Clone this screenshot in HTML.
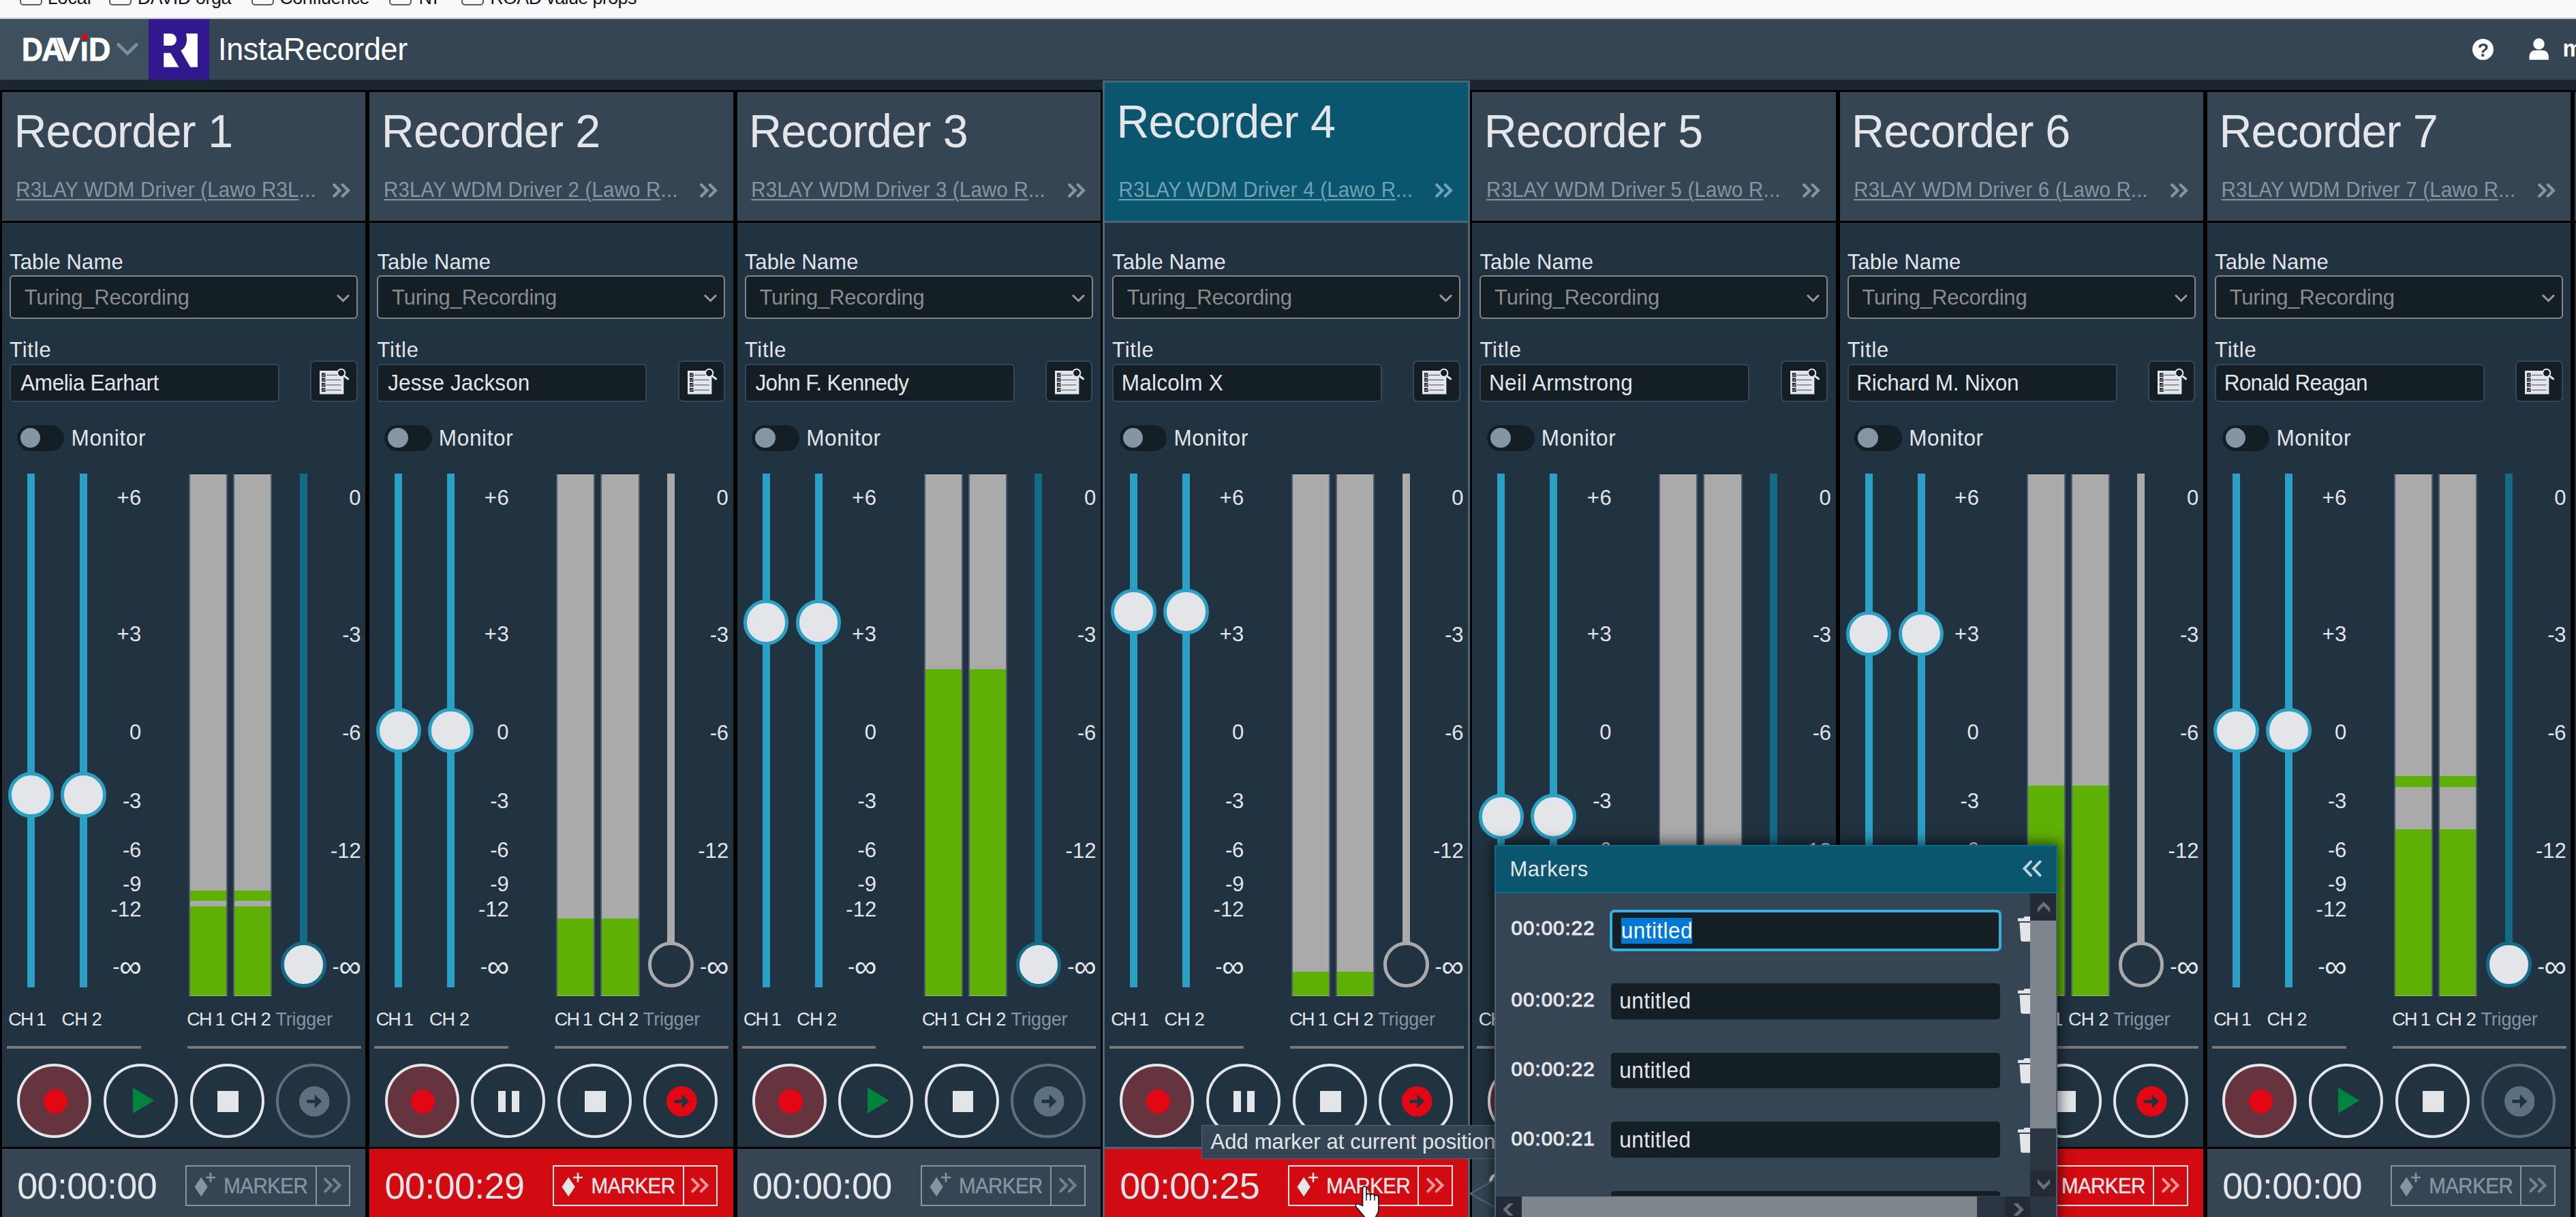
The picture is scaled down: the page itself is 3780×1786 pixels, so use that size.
<!DOCTYPE html>
<html><head><meta charset="utf-8"><title>InstaRecorder</title><style>
html,body{margin:0;padding:0;}
body{width:3780px;height:1786px;overflow:hidden;background:#1b2630;position:relative;font-family:"Liberation Sans",sans-serif;}
.b{position:absolute;display:block;}
.t{position:absolute;white-space:nowrap;line-height:1;display:block;}
</style></head><body>
<div class="b" style="left:0.00px;top:0.00px;width:3780.00px;height:26.20px;background:#f9f9fb;"></div>
<div class="b" style="left:0.00px;top:26.20px;width:3780.00px;height:1.80px;background:#c4c4c8;"></div>
<div class="b" style="left:29.00px;top:-20.00px;width:33.00px;height:28.00px;border:2.8px solid #5b5b66;border-radius:5.5px;box-sizing:border-box;"></div>
<span class="t" style="left:69.67px;top:-16.00px;font-size:27px;color:#15141a;letter-spacing:-0.106px;">Local</span>
<div class="b" style="left:160.00px;top:-20.00px;width:33.00px;height:28.00px;border:2.8px solid #5b5b66;border-radius:5.5px;box-sizing:border-box;"></div>
<span class="t" style="left:201.68px;top:-16.00px;font-size:27px;color:#15141a;letter-spacing:-0.456px;">DAVID orga</span>
<div class="b" style="left:368.80px;top:-20.00px;width:33.00px;height:28.00px;border:2.8px solid #5b5b66;border-radius:5.5px;box-sizing:border-box;"></div>
<span class="t" style="left:410.25px;top:-16.00px;font-size:27px;color:#15141a;letter-spacing:-0.472px;">Confluence</span>
<div class="b" style="left:571.40px;top:-20.00px;width:33.00px;height:28.00px;border:2.8px solid #5b5b66;border-radius:5.5px;box-sizing:border-box;"></div>
<span class="t" style="left:614.38px;top:-16.00px;font-size:27px;color:#15141a;letter-spacing:-3.450px;">NT</span>
<div class="b" style="left:677.40px;top:-20.00px;width:33.00px;height:28.00px;border:2.8px solid #5b5b66;border-radius:5.5px;box-sizing:border-box;"></div>
<span class="t" style="left:719.17px;top:-16.00px;font-size:27px;color:#15141a;letter-spacing:-0.655px;">ROAD value props</span>
<div class="b" style="left:0.00px;top:28.00px;width:3780.00px;height:88.80px;background:#364554;"></div>
<div class="b" style="left:0.00px;top:28.00px;width:218.00px;height:88.80px;background:#3e505e;"></div>
<div class="b" style="left:218.00px;top:28.00px;width:89.00px;height:88.80px;background:#31188f;"></div>
<span class="t" style="left:31.62px;top:48.57px;font-size:48px;color:#fff;font-weight:bold;transform-origin:0 0;transform:scaleX(0.8911);-webkit-text-stroke:0.9px #fff;">D</span>
<span class="t" style="left:61.22px;top:48.57px;font-size:48px;color:#fff;font-weight:bold;transform-origin:0 0;transform:scaleX(0.9575);-webkit-text-stroke:0.9px #fff;">A</span>
<span class="t" style="left:82.93px;top:48.57px;font-size:48px;color:#fff;font-weight:bold;transform-origin:0 0;transform:scaleX(1.0794);-webkit-text-stroke:0.9px #fff;">V</span>
<span class="t" style="left:118.05px;top:56.19px;font-size:39px;color:#fff;font-weight:bold;transform-origin:0 0;transform:scaleX(1.0609);-webkit-text-stroke:0.9px #fff;">I</span>
<span class="t" style="left:129.89px;top:48.57px;font-size:48px;color:#fff;font-weight:bold;transform-origin:0 0;transform:scaleX(0.9316);-webkit-text-stroke:0.9px #fff;">D</span>
<div class="b" style="left:120.20px;top:51.30px;width:7.50px;height:7.20px;background:#e30613;"></div>
<svg class="b" style="left:167.6px;top:59px" width="38" height="26" viewBox="0 0 38 26"><path d="M5.8 6.5 L19 19.5 L32.2 6.5" fill="none" stroke="#7d8d9b" stroke-width="4.8" stroke-linecap="round"/></svg>
<svg class="b" style="left:239.8px;top:49px" width="50.2" height="49.9" viewBox="0 0 50 50"><path d="M0.1 0.2 H10.8 A9 9 0 0 1 10.8 18.1 H0.1 Z M0.1 28.7 H10.2 L22.4 49.7 H0.1 Z M32.9 0.2 H50.2 V49.7 H39.2 L25.2 25.3 Q32.6 21 33.9 11.5 Q34.4 5.5 32.9 0.2 Z" fill="#fff"/></svg>
<span class="t" style="left:320.07px;top:50.00px;font-size:45px;color:#ffffff;letter-spacing:-0.371px;transform-origin:0 38px;transform:scaleY(1.04);">InstaRecorder</span>
<svg class="b" style="left:3628px;top:56.7px" width="31" height="31" viewBox="0 0 31 31"><circle cx="15.5" cy="15.5" r="15.5" fill="#fff"/></svg>
<span class="t" style="left:3635.38px;top:61.00px;font-size:27px;color:#364554;font-weight:bold;">?</span>
<svg class="b" style="left:3709px;top:54px" width="34" height="36" viewBox="0 0 34 36"><circle cx="16.5" cy="10.5" r="8.3" fill="#fff"/><path d="M2.5 33.8 V29 C2.5 23 7 19.8 12 19.8 H21.5 C26.5 19.8 30.8 23 30.8 29 V33.8 Z" fill="#fff"/></svg>
<span class="t" style="left:3760.47px;top:55.00px;font-size:33px;color:#ffffff;font-weight:bold;transform-origin:0 28px;transform:scaleY(1.04);">m</span>
<div class="b" style="left:0.00px;top:132.00px;width:539.33px;height:1664.00px;background:#000;"></div>
<div class="b" style="left:3.00px;top:135.00px;width:533.33px;height:189.30px;background:#364554;"></div>
<div class="b" style="left:3.00px;top:327.00px;width:533.33px;height:1355.80px;background:#213240;"></div>
<div class="b" style="left:3.00px;top:1686.00px;width:533.33px;height:110.00px;background:#364554;"></div>
<span class="t" style="left:20.43px;top:160.00px;font-size:66.5px;color:#e4e5e9;letter-spacing:-0.889px;transform-origin:0 56px;transform:scaleY(1.04);">Recorder</span>
<span class="t" style="left:305.30px;top:160.00px;font-size:66.5px;color:#e4e5e9;transform-origin:0 56px;transform:scaleY(1.04);">1</span>
<span class="t" style="left:23.23px;top:264.00px;font-size:29.5px;color:#8595a3;letter-spacing:0.193px;transform-origin:0 25px;transform:scaleY(1.04);"><span style="text-decoration:underline;text-decoration-thickness:2px;text-underline-offset:3px">R3LAY WDM Driver (Lawo R3L</span>...</span>
<svg class="b" style="left:486.00px;top:266px" width="30" height="27" viewBox="0 0 30 27"><path d="M4.2 5.2 L12.5 13.5 L4.2 21.8 M16.7 5.2 L25 13.5 L16.7 21.8" fill="none" stroke="#8595a3" stroke-width="4.2" stroke-linecap="round"/></svg>
<span class="t" style="left:14.07px;top:369.00px;font-size:31px;color:#e4e5e9;letter-spacing:0.136px;transform-origin:0 26px;transform:scaleY(1.04);">Table Name</span>
<div class="b" style="left:14.00px;top:404.30px;width:511.00px;height:63.70px;background:#131e25;border:2px solid #858585;border-radius:6px;box-sizing:border-box;"></div>
<span class="t" style="left:35.77px;top:421.00px;font-size:31px;color:#8c8c8c;letter-spacing:-0.202px;transform-origin:0 26px;transform:scaleY(1.04);">Turing_Recording</span>
<svg class="b" style="left:492.00px;top:428.5px" width="24" height="18" viewBox="0 0 24 18"><path d="M3 4 L11.5 12.5 L20 4" fill="none" stroke="#9a9a9a" stroke-width="3"/></svg>
<span class="t" style="left:14.07px;top:498.00px;font-size:31px;color:#e4e5e9;letter-spacing:0.806px;transform-origin:0 26px;transform:scaleY(1.04);">Title</span>
<div class="b" style="left:14.00px;top:533.50px;width:396.00px;height:56.20px;background:#131e25;border:2px solid #34485a;border-radius:6px;box-sizing:border-box;"></div>
<span class="t" style="left:30.20px;top:547.00px;font-size:31.5px;color:#e4e5e9;letter-spacing:-0.396px;transform-origin:0 26px;transform:scaleY(1.04);">Amelia Earhart</span>
<div class="b" style="left:455.40px;top:529.30px;width:69.40px;height:60.40px;background:#131e25;border:2px solid #34485a;border-radius:7px;box-sizing:border-box;"></div>
<svg class="b" style="left:468.30px;top:537.90px" width="46" height="42" viewBox="-1 -6 46 42"><rect x="0" y="0" width="35.4" height="34.5" fill="#e4e5e9"/><rect x="3" y="3.4000000000000004" width="5.6" height="5.6" fill="#1a2230"/><path d="M4 6.1000000000000005 l1.4 1.6 l2.4 -3.2" stroke="#e4e5e9" stroke-width="1" fill="none"/><rect x="10" y="5.9" width="21.5" height="1.1" fill="#50586a"/><rect x="3" y="10.5" width="5.6" height="5.6" fill="#1a2230"/><path d="M4 13.2 l1.4 1.6 l2.4 -3.2" stroke="#e4e5e9" stroke-width="1" fill="none"/><rect x="10" y="13.0" width="21.5" height="1.1" fill="#50586a"/><rect x="3" y="17.9" width="5.6" height="5.6" fill="#1a2230"/><path d="M4 20.599999999999998 l1.4 1.6 l2.4 -3.2" stroke="#e4e5e9" stroke-width="1" fill="none"/><rect x="10" y="20.4" width="21.5" height="1.1" fill="#50586a"/><rect x="3" y="25.4" width="5.6" height="5.6" fill="#1a2230"/><path d="M4 28.099999999999998 l1.4 1.6 l2.4 -3.2" stroke="#e4e5e9" stroke-width="1" fill="none"/><rect x="10" y="27.9" width="21.5" height="1.1" fill="#50586a"/><circle cx="31.7" cy="3.4" r="5.6" fill="#131e25" stroke="#e4e5e9" stroke-width="2"/><path d="M35.8 7.6 L41.6 12" stroke="#e4e5e9" stroke-width="3" stroke-linecap="round"/></svg>
<div class="b" style="left:24.60px;top:624.00px;width:69.70px;height:37.80px;background:#131e25;border-radius:19px;"></div>
<div class="b" style="left:29.60px;top:627.90px;width:29.60px;height:29.60px;background:#8595a3;border-radius:50%;"></div>
<span class="t" style="left:104.50px;top:628.00px;font-size:31.5px;color:#e4e5e9;letter-spacing:0.650px;transform-origin:0 26px;transform:scaleY(1.04);">Monitor</span>
<div class="b" style="left:40.00px;top:694.80px;width:11.00px;height:754.00px;background:#2aa0c4;"></div>
<div class="b" style="left:12.20px;top:1133.30px;width:66.60px;height:66.60px;background:#e4e5e9;border:5.6px solid #2aa0c4;border-radius:50%;box-sizing:border-box;"></div>
<div class="b" style="left:116.90px;top:694.80px;width:11.00px;height:754.00px;background:#2aa0c4;"></div>
<div class="b" style="left:89.10px;top:1133.30px;width:66.60px;height:66.60px;background:#e4e5e9;border:5.6px solid #2aa0c4;border-radius:50%;box-sizing:border-box;"></div>
<span class="t" style="left:171.40px;top:715.00px;font-size:31px;color:#e4e5e9;letter-spacing:0.575px;">+6</span>
<span class="t" style="left:171.40px;top:915.00px;font-size:31px;color:#e4e5e9;letter-spacing:0.575px;">+3</span>
<span class="t" style="left:189.97px;top:1059.00px;font-size:31px;color:#e4e5e9;">0</span>
<span class="t" style="left:179.92px;top:1160.00px;font-size:31px;color:#e4e5e9;letter-spacing:-0.200px;">-3</span>
<span class="t" style="left:179.92px;top:1232.00px;font-size:31px;color:#e4e5e9;letter-spacing:-0.200px;">-6</span>
<span class="t" style="left:179.92px;top:1282.00px;font-size:31px;color:#e4e5e9;letter-spacing:-0.075px;">-9</span>
<span class="t" style="left:162.62px;top:1319.00px;font-size:31px;color:#e4e5e9;letter-spacing:0.050px;">-12</span>
<span class="t" style="left:175.07px;top:1394.97px;font-size:46px;color:#e4e5e9;">∞</span>
<span class="t" style="left:165.32px;top:1403.00px;font-size:31px;color:#e4e5e9;">-</span>
<div class="b" style="left:276.90px;top:694.60px;width:57.20px;height:768.50px;background:#aaaaaa;border-left:2px solid #4a5c6e;border-right:2px solid #4a5c6e;border-top:1px solid #141e27;border-bottom:1px solid #141e27;box-sizing:border-box;"></div>
<div class="b" style="left:278.90px;top:1330.00px;width:53.20px;height:130.80px;background:#5eb004;"></div>
<div class="b" style="left:278.90px;top:1307.10px;width:53.20px;height:15.30px;background:#5eb004;"></div>
<div class="b" style="left:342.00px;top:694.60px;width:57.20px;height:768.50px;background:#aaaaaa;border-left:2px solid #4a5c6e;border-right:2px solid #4a5c6e;border-top:1px solid #141e27;border-bottom:1px solid #141e27;box-sizing:border-box;"></div>
<div class="b" style="left:344.00px;top:1330.00px;width:53.20px;height:130.80px;background:#5eb004;"></div>
<div class="b" style="left:344.00px;top:1307.10px;width:53.20px;height:15.30px;background:#5eb004;"></div>
<div class="b" style="left:439.80px;top:694.80px;width:11.00px;height:720.20px;background:#146b87;"></div>
<div class="b" style="left:412.00px;top:1382.20px;width:66.60px;height:66.60px;background:#e4e5e9;border:5.6px solid #146b87;border-radius:50%;box-sizing:border-box;"></div>
<span class="t" style="left:512.27px;top:715.00px;font-size:31px;color:#e4e5e9;">0</span>
<span class="t" style="left:502.32px;top:916.00px;font-size:31px;color:#e4e5e9;letter-spacing:-0.300px;">-3</span>
<span class="t" style="left:502.32px;top:1060.00px;font-size:31px;color:#e4e5e9;letter-spacing:-0.300px;">-6</span>
<span class="t" style="left:484.92px;top:1233.00px;font-size:31px;color:#e4e5e9;letter-spacing:0.050px;">-12</span>
<span class="t" style="left:497.37px;top:1394.97px;font-size:46px;color:#e4e5e9;">∞</span>
<span class="t" style="left:487.62px;top:1403.00px;font-size:31px;color:#e4e5e9;">-</span>
<span class="t" style="left:12.35px;top:1483.00px;font-size:27px;color:#e4e5e9;letter-spacing:-1.933px;transform-origin:0 22px;transform:scaleY(1.04);">CH 1</span>
<span class="t" style="left:90.55px;top:1483.00px;font-size:27px;color:#e4e5e9;letter-spacing:-0.800px;transform-origin:0 22px;transform:scaleY(1.04);">CH 2</span>
<span class="t" style="left:274.35px;top:1483.00px;font-size:27px;color:#e4e5e9;letter-spacing:-1.733px;transform-origin:0 22px;transform:scaleY(1.04);">CH 1</span>
<span class="t" style="left:338.35px;top:1483.00px;font-size:27px;color:#e4e5e9;letter-spacing:-0.667px;transform-origin:0 22px;transform:scaleY(1.04);">CH 2</span>
<span class="t" style="left:404.50px;top:1483.00px;font-size:27px;color:#8595a3;letter-spacing:-0.188px;transform-origin:0 22px;transform:scaleY(1.04);">Trigger</span>
<div class="b" style="left:10.00px;top:1534.80px;width:196.80px;height:4.40px;background:#787878;"></div>
<div class="b" style="left:275.00px;top:1534.80px;width:254.70px;height:4.40px;background:#787878;"></div>
<div class="b" style="left:25.30px;top:1560.90px;width:109.20px;height:109.20px;background:#65343e;border:4.7px solid #e4e5e9;border-radius:50%;box-sizing:border-box;"></div>
<div class="b" style="left:63.70px;top:1598.70px;width:35.40px;height:35.40px;background:#e30613;border-radius:50%;"></div>
<div class="b" style="left:151.70px;top:1560.90px;width:109.20px;height:109.20px;background:#213240;border:4.7px solid #e4e5e9;border-radius:50%;box-sizing:border-box;"></div>
<svg class="b" style="left:194.60px;top:1596.4px" width="32" height="38" viewBox="0 0 32 38"><path d="M0 0 L31.4 19 L0 38 Z" fill="#00843d"/></svg>
<div class="b" style="left:278.60px;top:1560.90px;width:109.20px;height:109.20px;background:#213240;border:4.7px solid #e4e5e9;border-radius:50%;box-sizing:border-box;"></div>
<div class="b" style="left:318.90px;top:1601.00px;width:30.80px;height:31.00px;background:#e4e5e9;"></div>
<div class="b" style="left:404.80px;top:1560.90px;width:109.20px;height:109.20px;background:#213240;border:4.7px solid #5c7080;border-radius:50%;box-sizing:border-box;"></div>
<svg class="b" style="left:438.70px;top:1594.20px" width="44.6" height="44.6" viewBox="0 0 44.6 44.6"><circle cx="22.3" cy="22.3" r="22.3" fill="#5c7080"/><path d="M11.5 19.95 H22.8 V12 L33.3 22.3 L22.8 32.6 V24.65 H11.5 Z" fill="#213240"/></svg>
<span class="t" style="left:25.20px;top:1713.00px;font-size:54px;color:#e4e5e9;letter-spacing:-0.675px;">00:00:00</span>
<div class="b" style="left:272.00px;top:1710.00px;width:242.00px;height:59.50px;border:2px solid #8595a3;box-sizing:border-box;"></div>
<div class="b" style="left:462.50px;top:1710.00px;width:2.00px;height:59.50px;background:#8595a3;"></div>
<svg class="b" style="left:283.00px;top:1718px" width="40" height="42" viewBox="0 0 40 42"><path d="M12.2 9.5 L21.8 23.8 L12.2 38 L2.5 23.8 Z" fill="#8595a3"/><path d="M26 3 V17 M19 10 H33" stroke="#8595a3" stroke-width="2.6" fill="none"/></svg>
<span class="t" style="left:328.23px;top:1726.00px;font-size:29.5px;color:#8595a3;letter-spacing:-0.540px;transform-origin:0 25px;transform:scaleY(1.06);-webkit-text-stroke:0.4px #8595a3;">MARKER</span>
<svg class="b" style="left:473.00px;top:1725px" width="30" height="30" viewBox="0 0 30 30"><path d="M4.2 5.7 L13 14.5 L4.2 23.3 M16.7 5.7 L25.5 14.5 L16.7 23.3" fill="none" stroke="#72828f" stroke-width="4" stroke-linecap="round"/></svg>
<div class="b" style="left:539.33px;top:132.00px;width:539.33px;height:1664.00px;background:#000;"></div>
<div class="b" style="left:542.33px;top:135.00px;width:533.33px;height:189.30px;background:#364554;"></div>
<div class="b" style="left:542.33px;top:327.00px;width:533.33px;height:1355.80px;background:#213240;"></div>
<div class="b" style="left:542.33px;top:1686.00px;width:533.33px;height:110.00px;background:#d20a11;"></div>
<span class="t" style="left:559.75px;top:160.00px;font-size:66.5px;color:#e4e5e9;letter-spacing:-0.889px;transform-origin:0 56px;transform:scaleY(1.04);">Recorder</span>
<span class="t" style="left:844.23px;top:160.00px;font-size:66.5px;color:#e4e5e9;transform-origin:0 56px;transform:scaleY(1.04);">2</span>
<span class="t" style="left:562.96px;top:264.00px;font-size:29.5px;color:#8595a3;letter-spacing:0.170px;transform-origin:0 25px;transform:scaleY(1.04);"><span style="text-decoration:underline;text-decoration-thickness:2px;text-underline-offset:3px">R3LAY WDM Driver 2 (Lawo R</span>...</span>
<svg class="b" style="left:1025.33px;top:266px" width="30" height="27" viewBox="0 0 30 27"><path d="M4.2 5.2 L12.5 13.5 L4.2 21.8 M16.7 5.2 L25 13.5 L16.7 21.8" fill="none" stroke="#8595a3" stroke-width="4.2" stroke-linecap="round"/></svg>
<span class="t" style="left:553.41px;top:369.00px;font-size:31px;color:#e4e5e9;letter-spacing:0.136px;transform-origin:0 26px;transform:scaleY(1.04);">Table Name</span>
<div class="b" style="left:553.33px;top:404.30px;width:511.00px;height:63.70px;background:#131e25;border:2px solid #858585;border-radius:6px;box-sizing:border-box;"></div>
<span class="t" style="left:575.11px;top:421.00px;font-size:31px;color:#8c8c8c;letter-spacing:-0.202px;transform-origin:0 26px;transform:scaleY(1.04);">Turing_Recording</span>
<svg class="b" style="left:1031.33px;top:428.5px" width="24" height="18" viewBox="0 0 24 18"><path d="M3 4 L11.5 12.5 L20 4" fill="none" stroke="#9a9a9a" stroke-width="3"/></svg>
<span class="t" style="left:553.41px;top:498.00px;font-size:31px;color:#e4e5e9;letter-spacing:0.806px;transform-origin:0 26px;transform:scaleY(1.04);">Title</span>
<div class="b" style="left:553.33px;top:533.50px;width:396.00px;height:56.20px;background:#131e25;border:2px solid #34485a;border-radius:6px;box-sizing:border-box;"></div>
<span class="t" style="left:569.16px;top:547.00px;font-size:31.5px;color:#e4e5e9;letter-spacing:0.129px;transform-origin:0 26px;transform:scaleY(1.04);">Jesse Jackson</span>
<div class="b" style="left:994.73px;top:529.30px;width:69.40px;height:60.40px;background:#131e25;border:2px solid #34485a;border-radius:7px;box-sizing:border-box;"></div>
<svg class="b" style="left:1007.63px;top:537.90px" width="46" height="42" viewBox="-1 -6 46 42"><rect x="0" y="0" width="35.4" height="34.5" fill="#e4e5e9"/><rect x="3" y="3.4000000000000004" width="5.6" height="5.6" fill="#1a2230"/><path d="M4 6.1000000000000005 l1.4 1.6 l2.4 -3.2" stroke="#e4e5e9" stroke-width="1" fill="none"/><rect x="10" y="5.9" width="21.5" height="1.1" fill="#50586a"/><rect x="3" y="10.5" width="5.6" height="5.6" fill="#1a2230"/><path d="M4 13.2 l1.4 1.6 l2.4 -3.2" stroke="#e4e5e9" stroke-width="1" fill="none"/><rect x="10" y="13.0" width="21.5" height="1.1" fill="#50586a"/><rect x="3" y="17.9" width="5.6" height="5.6" fill="#1a2230"/><path d="M4 20.599999999999998 l1.4 1.6 l2.4 -3.2" stroke="#e4e5e9" stroke-width="1" fill="none"/><rect x="10" y="20.4" width="21.5" height="1.1" fill="#50586a"/><rect x="3" y="25.4" width="5.6" height="5.6" fill="#1a2230"/><path d="M4 28.099999999999998 l1.4 1.6 l2.4 -3.2" stroke="#e4e5e9" stroke-width="1" fill="none"/><rect x="10" y="27.9" width="21.5" height="1.1" fill="#50586a"/><circle cx="31.7" cy="3.4" r="5.6" fill="#131e25" stroke="#e4e5e9" stroke-width="2"/><path d="M35.8 7.6 L41.6 12" stroke="#e4e5e9" stroke-width="3" stroke-linecap="round"/></svg>
<div class="b" style="left:563.93px;top:624.00px;width:69.70px;height:37.80px;background:#131e25;border-radius:19px;"></div>
<div class="b" style="left:568.93px;top:627.90px;width:29.60px;height:29.60px;background:#8595a3;border-radius:50%;"></div>
<span class="t" style="left:643.83px;top:628.00px;font-size:31.5px;color:#e4e5e9;letter-spacing:0.650px;transform-origin:0 26px;transform:scaleY(1.04);">Monitor</span>
<div class="b" style="left:579.33px;top:694.80px;width:11.00px;height:754.00px;background:#2aa0c4;"></div>
<div class="b" style="left:551.53px;top:1038.70px;width:66.60px;height:66.60px;background:#e4e5e9;border:5.6px solid #2aa0c4;border-radius:50%;box-sizing:border-box;"></div>
<div class="b" style="left:656.23px;top:694.80px;width:11.00px;height:754.00px;background:#2aa0c4;"></div>
<div class="b" style="left:628.43px;top:1038.70px;width:66.60px;height:66.60px;background:#e4e5e9;border:5.6px solid #2aa0c4;border-radius:50%;box-sizing:border-box;"></div>
<span class="t" style="left:710.73px;top:715.00px;font-size:31px;color:#e4e5e9;letter-spacing:0.575px;">+6</span>
<span class="t" style="left:710.73px;top:915.00px;font-size:31px;color:#e4e5e9;letter-spacing:0.575px;">+3</span>
<span class="t" style="left:729.31px;top:1059.00px;font-size:31px;color:#e4e5e9;">0</span>
<span class="t" style="left:719.26px;top:1160.00px;font-size:31px;color:#e4e5e9;letter-spacing:-0.200px;">-3</span>
<span class="t" style="left:719.26px;top:1232.00px;font-size:31px;color:#e4e5e9;letter-spacing:-0.200px;">-6</span>
<span class="t" style="left:719.26px;top:1282.00px;font-size:31px;color:#e4e5e9;letter-spacing:-0.075px;">-9</span>
<span class="t" style="left:701.96px;top:1319.00px;font-size:31px;color:#e4e5e9;letter-spacing:0.050px;">-12</span>
<span class="t" style="left:714.40px;top:1394.97px;font-size:46px;color:#e4e5e9;">∞</span>
<span class="t" style="left:704.66px;top:1403.00px;font-size:31px;color:#e4e5e9;">-</span>
<div class="b" style="left:816.23px;top:694.60px;width:57.20px;height:768.50px;background:#aaaaaa;border-left:2px solid #4a5c6e;border-right:2px solid #4a5c6e;border-top:1px solid #141e27;border-bottom:1px solid #141e27;box-sizing:border-box;"></div>
<div class="b" style="left:818.23px;top:1348.20px;width:53.20px;height:112.60px;background:#5eb004;"></div>
<div class="b" style="left:881.33px;top:694.60px;width:57.20px;height:768.50px;background:#aaaaaa;border-left:2px solid #4a5c6e;border-right:2px solid #4a5c6e;border-top:1px solid #141e27;border-bottom:1px solid #141e27;box-sizing:border-box;"></div>
<div class="b" style="left:883.33px;top:1348.20px;width:53.20px;height:112.60px;background:#5eb004;"></div>
<div class="b" style="left:979.13px;top:694.80px;width:11.00px;height:720.20px;background:#aaaaaa;"></div>
<div class="b" style="left:951.33px;top:1382.20px;width:66.60px;height:66.60px;background:#213240;border:5.6px solid #aaaaaa;border-radius:50%;box-sizing:border-box;"></div>
<span class="t" style="left:1051.61px;top:715.00px;font-size:31px;color:#e4e5e9;">0</span>
<span class="t" style="left:1041.65px;top:916.00px;font-size:31px;color:#e4e5e9;letter-spacing:-0.300px;">-3</span>
<span class="t" style="left:1041.65px;top:1060.00px;font-size:31px;color:#e4e5e9;letter-spacing:-0.300px;">-6</span>
<span class="t" style="left:1024.26px;top:1233.00px;font-size:31px;color:#e4e5e9;letter-spacing:0.050px;">-12</span>
<span class="t" style="left:1036.70px;top:1394.97px;font-size:46px;color:#e4e5e9;">∞</span>
<span class="t" style="left:1026.95px;top:1403.00px;font-size:31px;color:#e4e5e9;">-</span>
<span class="t" style="left:551.68px;top:1483.00px;font-size:27px;color:#e4e5e9;letter-spacing:-1.933px;transform-origin:0 22px;transform:scaleY(1.04);">CH 1</span>
<span class="t" style="left:629.88px;top:1483.00px;font-size:27px;color:#e4e5e9;letter-spacing:-0.800px;transform-origin:0 22px;transform:scaleY(1.04);">CH 2</span>
<span class="t" style="left:813.68px;top:1483.00px;font-size:27px;color:#e4e5e9;letter-spacing:-1.733px;transform-origin:0 22px;transform:scaleY(1.04);">CH 1</span>
<span class="t" style="left:877.68px;top:1483.00px;font-size:27px;color:#e4e5e9;letter-spacing:-0.667px;transform-origin:0 22px;transform:scaleY(1.04);">CH 2</span>
<span class="t" style="left:943.83px;top:1483.00px;font-size:27px;color:#8595a3;letter-spacing:-0.188px;transform-origin:0 22px;transform:scaleY(1.04);">Trigger</span>
<div class="b" style="left:549.33px;top:1534.80px;width:196.80px;height:4.40px;background:#787878;"></div>
<div class="b" style="left:814.33px;top:1534.80px;width:254.70px;height:4.40px;background:#787878;"></div>
<div class="b" style="left:564.63px;top:1560.90px;width:109.20px;height:109.20px;background:#65343e;border:4.7px solid #e4e5e9;border-radius:50%;box-sizing:border-box;"></div>
<div class="b" style="left:603.03px;top:1598.70px;width:35.40px;height:35.40px;background:#e30613;border-radius:50%;"></div>
<div class="b" style="left:691.03px;top:1560.90px;width:109.20px;height:109.20px;background:#213240;border:4.7px solid #e4e5e9;border-radius:50%;box-sizing:border-box;"></div>
<div class="b" style="left:731.23px;top:1601.00px;width:11.00px;height:31.00px;background:#e4e5e9;"></div>
<div class="b" style="left:751.33px;top:1601.00px;width:11.00px;height:31.00px;background:#e4e5e9;"></div>
<div class="b" style="left:817.93px;top:1560.90px;width:109.20px;height:109.20px;background:#213240;border:4.7px solid #e4e5e9;border-radius:50%;box-sizing:border-box;"></div>
<div class="b" style="left:858.23px;top:1601.00px;width:30.80px;height:31.00px;background:#e4e5e9;"></div>
<div class="b" style="left:944.13px;top:1560.90px;width:109.20px;height:109.20px;background:#213240;border:4.7px solid #e4e5e9;border-radius:50%;box-sizing:border-box;"></div>
<svg class="b" style="left:978.03px;top:1594.20px" width="44.6" height="44.6" viewBox="0 0 44.6 44.6"><circle cx="22.3" cy="22.3" r="22.3" fill="#e30613"/><path d="M11.5 19.95 H22.8 V12 L33.3 22.3 L22.8 32.6 V24.65 H11.5 Z" fill="#213240"/></svg>
<span class="t" style="left:564.53px;top:1713.00px;font-size:54px;color:#e4e5e9;letter-spacing:-0.675px;">00:00:29</span>
<div class="b" style="left:811.33px;top:1710.00px;width:242.00px;height:59.50px;border:2px solid #e4e5e9;box-sizing:border-box;"></div>
<div class="b" style="left:1001.83px;top:1710.00px;width:2.00px;height:59.50px;background:#e4e5e9;"></div>
<svg class="b" style="left:822.33px;top:1718px" width="40" height="42" viewBox="0 0 40 42"><path d="M12.2 9.5 L21.8 23.8 L12.2 38 L2.5 23.8 Z" fill="#e4e5e9"/><path d="M26 3 V17 M19 10 H33" stroke="#e4e5e9" stroke-width="2.6" fill="none"/></svg>
<span class="t" style="left:867.56px;top:1726.00px;font-size:29.5px;color:#e4e5e9;letter-spacing:-0.540px;transform-origin:0 25px;transform:scaleY(1.06);-webkit-text-stroke:0.4px #e4e5e9;">MARKER</span>
<svg class="b" style="left:1012.33px;top:1725px" width="30" height="30" viewBox="0 0 30 30"><path d="M4.2 5.7 L13 14.5 L4.2 23.3 M16.7 5.7 L25.5 14.5 L16.7 23.3" fill="none" stroke="#e8979c" stroke-width="4" stroke-linecap="round"/></svg>
<div class="b" style="left:1078.66px;top:132.00px;width:539.33px;height:1664.00px;background:#000;"></div>
<div class="b" style="left:1081.66px;top:135.00px;width:533.33px;height:189.30px;background:#364554;"></div>
<div class="b" style="left:1081.66px;top:327.00px;width:533.33px;height:1355.80px;background:#213240;"></div>
<div class="b" style="left:1081.66px;top:1686.00px;width:533.33px;height:110.00px;background:#364554;"></div>
<span class="t" style="left:1099.09px;top:160.00px;font-size:66.5px;color:#e4e5e9;letter-spacing:-0.889px;transform-origin:0 56px;transform:scaleY(1.04);">Recorder</span>
<span class="t" style="left:1383.75px;top:160.00px;font-size:66.5px;color:#e4e5e9;transform-origin:0 56px;transform:scaleY(1.04);">3</span>
<span class="t" style="left:1102.29px;top:264.00px;font-size:29.5px;color:#8595a3;letter-spacing:0.170px;transform-origin:0 25px;transform:scaleY(1.04);"><span style="text-decoration:underline;text-decoration-thickness:2px;text-underline-offset:3px">R3LAY WDM Driver 3 (Lawo R</span>...</span>
<svg class="b" style="left:1564.66px;top:266px" width="30" height="27" viewBox="0 0 30 27"><path d="M4.2 5.2 L12.5 13.5 L4.2 21.8 M16.7 5.2 L25 13.5 L16.7 21.8" fill="none" stroke="#8595a3" stroke-width="4.2" stroke-linecap="round"/></svg>
<span class="t" style="left:1092.74px;top:369.00px;font-size:31px;color:#e4e5e9;letter-spacing:0.136px;transform-origin:0 26px;transform:scaleY(1.04);">Table Name</span>
<div class="b" style="left:1092.66px;top:404.30px;width:511.00px;height:63.70px;background:#131e25;border:2px solid #858585;border-radius:6px;box-sizing:border-box;"></div>
<span class="t" style="left:1114.44px;top:421.00px;font-size:31px;color:#8c8c8c;letter-spacing:-0.202px;transform-origin:0 26px;transform:scaleY(1.04);">Turing_Recording</span>
<svg class="b" style="left:1570.66px;top:428.5px" width="24" height="18" viewBox="0 0 24 18"><path d="M3 4 L11.5 12.5 L20 4" fill="none" stroke="#9a9a9a" stroke-width="3"/></svg>
<span class="t" style="left:1092.74px;top:498.00px;font-size:31px;color:#e4e5e9;letter-spacing:0.806px;transform-origin:0 26px;transform:scaleY(1.04);">Title</span>
<div class="b" style="left:1092.66px;top:533.50px;width:396.00px;height:56.20px;background:#131e25;border:2px solid #34485a;border-radius:6px;box-sizing:border-box;"></div>
<span class="t" style="left:1108.49px;top:547.00px;font-size:31.5px;color:#e4e5e9;letter-spacing:-0.661px;transform-origin:0 26px;transform:scaleY(1.04);">John F. Kennedy</span>
<div class="b" style="left:1534.06px;top:529.30px;width:69.40px;height:60.40px;background:#131e25;border:2px solid #34485a;border-radius:7px;box-sizing:border-box;"></div>
<svg class="b" style="left:1546.96px;top:537.90px" width="46" height="42" viewBox="-1 -6 46 42"><rect x="0" y="0" width="35.4" height="34.5" fill="#e4e5e9"/><rect x="3" y="3.4000000000000004" width="5.6" height="5.6" fill="#1a2230"/><path d="M4 6.1000000000000005 l1.4 1.6 l2.4 -3.2" stroke="#e4e5e9" stroke-width="1" fill="none"/><rect x="10" y="5.9" width="21.5" height="1.1" fill="#50586a"/><rect x="3" y="10.5" width="5.6" height="5.6" fill="#1a2230"/><path d="M4 13.2 l1.4 1.6 l2.4 -3.2" stroke="#e4e5e9" stroke-width="1" fill="none"/><rect x="10" y="13.0" width="21.5" height="1.1" fill="#50586a"/><rect x="3" y="17.9" width="5.6" height="5.6" fill="#1a2230"/><path d="M4 20.599999999999998 l1.4 1.6 l2.4 -3.2" stroke="#e4e5e9" stroke-width="1" fill="none"/><rect x="10" y="20.4" width="21.5" height="1.1" fill="#50586a"/><rect x="3" y="25.4" width="5.6" height="5.6" fill="#1a2230"/><path d="M4 28.099999999999998 l1.4 1.6 l2.4 -3.2" stroke="#e4e5e9" stroke-width="1" fill="none"/><rect x="10" y="27.9" width="21.5" height="1.1" fill="#50586a"/><circle cx="31.7" cy="3.4" r="5.6" fill="#131e25" stroke="#e4e5e9" stroke-width="2"/><path d="M35.8 7.6 L41.6 12" stroke="#e4e5e9" stroke-width="3" stroke-linecap="round"/></svg>
<div class="b" style="left:1103.26px;top:624.00px;width:69.70px;height:37.80px;background:#131e25;border-radius:19px;"></div>
<div class="b" style="left:1108.26px;top:627.90px;width:29.60px;height:29.60px;background:#8595a3;border-radius:50%;"></div>
<span class="t" style="left:1183.16px;top:628.00px;font-size:31.5px;color:#e4e5e9;letter-spacing:0.650px;transform-origin:0 26px;transform:scaleY(1.04);">Monitor</span>
<div class="b" style="left:1118.66px;top:694.80px;width:11.00px;height:754.00px;background:#2aa0c4;"></div>
<div class="b" style="left:1090.86px;top:880.40px;width:66.60px;height:66.60px;background:#e4e5e9;border:5.6px solid #2aa0c4;border-radius:50%;box-sizing:border-box;"></div>
<div class="b" style="left:1195.56px;top:694.80px;width:11.00px;height:754.00px;background:#2aa0c4;"></div>
<div class="b" style="left:1167.76px;top:880.40px;width:66.60px;height:66.60px;background:#e4e5e9;border:5.6px solid #2aa0c4;border-radius:50%;box-sizing:border-box;"></div>
<span class="t" style="left:1250.06px;top:715.00px;font-size:31px;color:#e4e5e9;letter-spacing:0.575px;">+6</span>
<span class="t" style="left:1250.06px;top:915.00px;font-size:31px;color:#e4e5e9;letter-spacing:0.575px;">+3</span>
<span class="t" style="left:1268.63px;top:1059.00px;font-size:31px;color:#e4e5e9;">0</span>
<span class="t" style="left:1258.59px;top:1160.00px;font-size:31px;color:#e4e5e9;letter-spacing:-0.200px;">-3</span>
<span class="t" style="left:1258.59px;top:1232.00px;font-size:31px;color:#e4e5e9;letter-spacing:-0.200px;">-6</span>
<span class="t" style="left:1258.59px;top:1282.00px;font-size:31px;color:#e4e5e9;letter-spacing:-0.075px;">-9</span>
<span class="t" style="left:1241.29px;top:1319.00px;font-size:31px;color:#e4e5e9;letter-spacing:0.050px;">-12</span>
<span class="t" style="left:1253.73px;top:1394.97px;font-size:46px;color:#e4e5e9;">∞</span>
<span class="t" style="left:1243.98px;top:1403.00px;font-size:31px;color:#e4e5e9;">-</span>
<div class="b" style="left:1355.56px;top:694.60px;width:57.20px;height:768.50px;background:#aaaaaa;border-left:2px solid #4a5c6e;border-right:2px solid #4a5c6e;border-top:1px solid #141e27;border-bottom:1px solid #141e27;box-sizing:border-box;"></div>
<div class="b" style="left:1357.56px;top:981.80px;width:53.20px;height:479.00px;background:#5eb004;"></div>
<div class="b" style="left:1420.66px;top:694.60px;width:57.20px;height:768.50px;background:#aaaaaa;border-left:2px solid #4a5c6e;border-right:2px solid #4a5c6e;border-top:1px solid #141e27;border-bottom:1px solid #141e27;box-sizing:border-box;"></div>
<div class="b" style="left:1422.66px;top:981.80px;width:53.20px;height:479.00px;background:#5eb004;"></div>
<div class="b" style="left:1518.46px;top:694.80px;width:11.00px;height:720.20px;background:#146b87;"></div>
<div class="b" style="left:1490.66px;top:1382.20px;width:66.60px;height:66.60px;background:#e4e5e9;border:5.6px solid #146b87;border-radius:50%;box-sizing:border-box;"></div>
<span class="t" style="left:1590.93px;top:715.00px;font-size:31px;color:#e4e5e9;">0</span>
<span class="t" style="left:1580.98px;top:916.00px;font-size:31px;color:#e4e5e9;letter-spacing:-0.300px;">-3</span>
<span class="t" style="left:1580.98px;top:1060.00px;font-size:31px;color:#e4e5e9;letter-spacing:-0.300px;">-6</span>
<span class="t" style="left:1563.59px;top:1233.00px;font-size:31px;color:#e4e5e9;letter-spacing:0.050px;">-12</span>
<span class="t" style="left:1576.03px;top:1394.97px;font-size:46px;color:#e4e5e9;">∞</span>
<span class="t" style="left:1566.28px;top:1403.00px;font-size:31px;color:#e4e5e9;">-</span>
<span class="t" style="left:1091.01px;top:1483.00px;font-size:27px;color:#e4e5e9;letter-spacing:-1.933px;transform-origin:0 22px;transform:scaleY(1.04);">CH 1</span>
<span class="t" style="left:1169.21px;top:1483.00px;font-size:27px;color:#e4e5e9;letter-spacing:-0.800px;transform-origin:0 22px;transform:scaleY(1.04);">CH 2</span>
<span class="t" style="left:1353.01px;top:1483.00px;font-size:27px;color:#e4e5e9;letter-spacing:-1.733px;transform-origin:0 22px;transform:scaleY(1.04);">CH 1</span>
<span class="t" style="left:1417.01px;top:1483.00px;font-size:27px;color:#e4e5e9;letter-spacing:-0.667px;transform-origin:0 22px;transform:scaleY(1.04);">CH 2</span>
<span class="t" style="left:1483.16px;top:1483.00px;font-size:27px;color:#8595a3;letter-spacing:-0.188px;transform-origin:0 22px;transform:scaleY(1.04);">Trigger</span>
<div class="b" style="left:1088.66px;top:1534.80px;width:196.80px;height:4.40px;background:#787878;"></div>
<div class="b" style="left:1353.66px;top:1534.80px;width:254.70px;height:4.40px;background:#787878;"></div>
<div class="b" style="left:1103.96px;top:1560.90px;width:109.20px;height:109.20px;background:#65343e;border:4.7px solid #e4e5e9;border-radius:50%;box-sizing:border-box;"></div>
<div class="b" style="left:1142.36px;top:1598.70px;width:35.40px;height:35.40px;background:#e30613;border-radius:50%;"></div>
<div class="b" style="left:1230.36px;top:1560.90px;width:109.20px;height:109.20px;background:#213240;border:4.7px solid #e4e5e9;border-radius:50%;box-sizing:border-box;"></div>
<svg class="b" style="left:1273.26px;top:1596.4px" width="32" height="38" viewBox="0 0 32 38"><path d="M0 0 L31.4 19 L0 38 Z" fill="#00843d"/></svg>
<div class="b" style="left:1357.26px;top:1560.90px;width:109.20px;height:109.20px;background:#213240;border:4.7px solid #e4e5e9;border-radius:50%;box-sizing:border-box;"></div>
<div class="b" style="left:1397.56px;top:1601.00px;width:30.80px;height:31.00px;background:#e4e5e9;"></div>
<div class="b" style="left:1483.46px;top:1560.90px;width:109.20px;height:109.20px;background:#213240;border:4.7px solid #5c7080;border-radius:50%;box-sizing:border-box;"></div>
<svg class="b" style="left:1517.36px;top:1594.20px" width="44.6" height="44.6" viewBox="0 0 44.6 44.6"><circle cx="22.3" cy="22.3" r="22.3" fill="#5c7080"/><path d="M11.5 19.95 H22.8 V12 L33.3 22.3 L22.8 32.6 V24.65 H11.5 Z" fill="#213240"/></svg>
<span class="t" style="left:1103.86px;top:1713.00px;font-size:54px;color:#e4e5e9;letter-spacing:-0.675px;">00:00:00</span>
<div class="b" style="left:1350.66px;top:1710.00px;width:242.00px;height:59.50px;border:2px solid #8595a3;box-sizing:border-box;"></div>
<div class="b" style="left:1541.16px;top:1710.00px;width:2.00px;height:59.50px;background:#8595a3;"></div>
<svg class="b" style="left:1361.66px;top:1718px" width="40" height="42" viewBox="0 0 40 42"><path d="M12.2 9.5 L21.8 23.8 L12.2 38 L2.5 23.8 Z" fill="#8595a3"/><path d="M26 3 V17 M19 10 H33" stroke="#8595a3" stroke-width="2.6" fill="none"/></svg>
<span class="t" style="left:1406.89px;top:1726.00px;font-size:29.5px;color:#8595a3;letter-spacing:-0.540px;transform-origin:0 25px;transform:scaleY(1.06);-webkit-text-stroke:0.4px #8595a3;">MARKER</span>
<svg class="b" style="left:1551.66px;top:1725px" width="30" height="30" viewBox="0 0 30 30"><path d="M4.2 5.7 L13 14.5 L4.2 23.3 M16.7 5.7 L25.5 14.5 L16.7 23.3" fill="none" stroke="#72828f" stroke-width="4" stroke-linecap="round"/></svg>
<div class="b" style="left:1617.99px;top:117.50px;width:539.33px;height:1678.50px;background:#4a6478;"></div>
<div class="b" style="left:1620.99px;top:120.50px;width:533.33px;height:203.80px;background:#0a566e;"></div>
<div class="b" style="left:1620.99px;top:327.00px;width:533.33px;height:1355.80px;background:#213240;"></div>
<div class="b" style="left:1620.99px;top:1686.00px;width:533.33px;height:110.00px;background:#d20a11;"></div>
<span class="t" style="left:1638.42px;top:146.00px;font-size:66.5px;color:#e4e5e9;letter-spacing:-0.889px;transform-origin:0 56px;transform:scaleY(1.04);">Recorder</span>
<span class="t" style="left:1923.08px;top:146.00px;font-size:66.5px;color:#e4e5e9;transform-origin:0 56px;transform:scaleY(1.04);">4</span>
<span class="t" style="left:1641.62px;top:264.00px;font-size:29.5px;color:#6fa3b5;letter-spacing:0.170px;transform-origin:0 25px;transform:scaleY(1.04);"><span style="text-decoration:underline;text-decoration-thickness:2px;text-underline-offset:3px">R3LAY WDM Driver 4 (Lawo R</span>...</span>
<svg class="b" style="left:2103.99px;top:266px" width="30" height="27" viewBox="0 0 30 27"><path d="M4.2 5.2 L12.5 13.5 L4.2 21.8 M16.7 5.2 L25 13.5 L16.7 21.8" fill="none" stroke="#6fa3b5" stroke-width="4.2" stroke-linecap="round"/></svg>
<span class="t" style="left:1632.07px;top:369.00px;font-size:31px;color:#e4e5e9;letter-spacing:0.136px;transform-origin:0 26px;transform:scaleY(1.04);">Table Name</span>
<div class="b" style="left:1631.99px;top:404.30px;width:511.00px;height:63.70px;background:#131e25;border:2px solid #858585;border-radius:6px;box-sizing:border-box;"></div>
<span class="t" style="left:1653.77px;top:421.00px;font-size:31px;color:#8c8c8c;letter-spacing:-0.202px;transform-origin:0 26px;transform:scaleY(1.04);">Turing_Recording</span>
<svg class="b" style="left:2109.99px;top:428.5px" width="24" height="18" viewBox="0 0 24 18"><path d="M3 4 L11.5 12.5 L20 4" fill="none" stroke="#9a9a9a" stroke-width="3"/></svg>
<span class="t" style="left:1632.07px;top:498.00px;font-size:31px;color:#e4e5e9;letter-spacing:0.806px;transform-origin:0 26px;transform:scaleY(1.04);">Title</span>
<div class="b" style="left:1631.99px;top:533.50px;width:396.00px;height:56.20px;background:#131e25;border:2px solid #34485a;border-radius:6px;box-sizing:border-box;"></div>
<span class="t" style="left:1645.69px;top:547.00px;font-size:31.5px;color:#e4e5e9;letter-spacing:0.266px;transform-origin:0 26px;transform:scaleY(1.04);">Malcolm X</span>
<div class="b" style="left:2073.39px;top:529.30px;width:69.40px;height:60.40px;background:#131e25;border:2px solid #34485a;border-radius:7px;box-sizing:border-box;"></div>
<svg class="b" style="left:2086.29px;top:537.90px" width="46" height="42" viewBox="-1 -6 46 42"><rect x="0" y="0" width="35.4" height="34.5" fill="#e4e5e9"/><rect x="3" y="3.4000000000000004" width="5.6" height="5.6" fill="#1a2230"/><path d="M4 6.1000000000000005 l1.4 1.6 l2.4 -3.2" stroke="#e4e5e9" stroke-width="1" fill="none"/><rect x="10" y="5.9" width="21.5" height="1.1" fill="#50586a"/><rect x="3" y="10.5" width="5.6" height="5.6" fill="#1a2230"/><path d="M4 13.2 l1.4 1.6 l2.4 -3.2" stroke="#e4e5e9" stroke-width="1" fill="none"/><rect x="10" y="13.0" width="21.5" height="1.1" fill="#50586a"/><rect x="3" y="17.9" width="5.6" height="5.6" fill="#1a2230"/><path d="M4 20.599999999999998 l1.4 1.6 l2.4 -3.2" stroke="#e4e5e9" stroke-width="1" fill="none"/><rect x="10" y="20.4" width="21.5" height="1.1" fill="#50586a"/><rect x="3" y="25.4" width="5.6" height="5.6" fill="#1a2230"/><path d="M4 28.099999999999998 l1.4 1.6 l2.4 -3.2" stroke="#e4e5e9" stroke-width="1" fill="none"/><rect x="10" y="27.9" width="21.5" height="1.1" fill="#50586a"/><circle cx="31.7" cy="3.4" r="5.6" fill="#131e25" stroke="#e4e5e9" stroke-width="2"/><path d="M35.8 7.6 L41.6 12" stroke="#e4e5e9" stroke-width="3" stroke-linecap="round"/></svg>
<div class="b" style="left:1642.59px;top:624.00px;width:69.70px;height:37.80px;background:#131e25;border-radius:19px;"></div>
<div class="b" style="left:1647.59px;top:627.90px;width:29.60px;height:29.60px;background:#8595a3;border-radius:50%;"></div>
<span class="t" style="left:1722.49px;top:628.00px;font-size:31.5px;color:#e4e5e9;letter-spacing:0.650px;transform-origin:0 26px;transform:scaleY(1.04);">Monitor</span>
<div class="b" style="left:1657.99px;top:694.80px;width:11.00px;height:754.00px;background:#2aa0c4;"></div>
<div class="b" style="left:1630.19px;top:864.30px;width:66.60px;height:66.60px;background:#e4e5e9;border:5.6px solid #2aa0c4;border-radius:50%;box-sizing:border-box;"></div>
<div class="b" style="left:1734.89px;top:694.80px;width:11.00px;height:754.00px;background:#2aa0c4;"></div>
<div class="b" style="left:1707.09px;top:864.30px;width:66.60px;height:66.60px;background:#e4e5e9;border:5.6px solid #2aa0c4;border-radius:50%;box-sizing:border-box;"></div>
<span class="t" style="left:1789.39px;top:715.00px;font-size:31px;color:#e4e5e9;letter-spacing:0.575px;">+6</span>
<span class="t" style="left:1789.39px;top:915.00px;font-size:31px;color:#e4e5e9;letter-spacing:0.575px;">+3</span>
<span class="t" style="left:1807.97px;top:1059.00px;font-size:31px;color:#e4e5e9;">0</span>
<span class="t" style="left:1797.92px;top:1160.00px;font-size:31px;color:#e4e5e9;letter-spacing:-0.200px;">-3</span>
<span class="t" style="left:1797.92px;top:1232.00px;font-size:31px;color:#e4e5e9;letter-spacing:-0.200px;">-6</span>
<span class="t" style="left:1797.92px;top:1282.00px;font-size:31px;color:#e4e5e9;letter-spacing:-0.075px;">-9</span>
<span class="t" style="left:1780.62px;top:1319.00px;font-size:31px;color:#e4e5e9;letter-spacing:0.050px;">-12</span>
<span class="t" style="left:1793.06px;top:1394.97px;font-size:46px;color:#e4e5e9;">∞</span>
<span class="t" style="left:1783.32px;top:1403.00px;font-size:31px;color:#e4e5e9;">-</span>
<div class="b" style="left:1894.89px;top:694.60px;width:57.20px;height:768.50px;background:#aaaaaa;border-left:2px solid #4a5c6e;border-right:2px solid #4a5c6e;border-top:1px solid #141e27;border-bottom:1px solid #141e27;box-sizing:border-box;"></div>
<div class="b" style="left:1896.89px;top:1425.70px;width:53.20px;height:35.10px;background:#5eb004;"></div>
<div class="b" style="left:1959.99px;top:694.60px;width:57.20px;height:768.50px;background:#aaaaaa;border-left:2px solid #4a5c6e;border-right:2px solid #4a5c6e;border-top:1px solid #141e27;border-bottom:1px solid #141e27;box-sizing:border-box;"></div>
<div class="b" style="left:1961.99px;top:1425.70px;width:53.20px;height:35.10px;background:#5eb004;"></div>
<div class="b" style="left:2057.79px;top:694.80px;width:11.00px;height:720.20px;background:#aaaaaa;"></div>
<div class="b" style="left:2029.99px;top:1382.20px;width:66.60px;height:66.60px;background:#213240;border:5.6px solid #aaaaaa;border-radius:50%;box-sizing:border-box;"></div>
<span class="t" style="left:2130.27px;top:715.00px;font-size:31px;color:#e4e5e9;">0</span>
<span class="t" style="left:2120.32px;top:916.00px;font-size:31px;color:#e4e5e9;letter-spacing:-0.300px;">-3</span>
<span class="t" style="left:2120.32px;top:1060.00px;font-size:31px;color:#e4e5e9;letter-spacing:-0.300px;">-6</span>
<span class="t" style="left:2102.92px;top:1233.00px;font-size:31px;color:#e4e5e9;letter-spacing:0.050px;">-12</span>
<span class="t" style="left:2115.36px;top:1394.97px;font-size:46px;color:#e4e5e9;">∞</span>
<span class="t" style="left:2105.62px;top:1403.00px;font-size:31px;color:#e4e5e9;">-</span>
<span class="t" style="left:1630.34px;top:1483.00px;font-size:27px;color:#e4e5e9;letter-spacing:-1.933px;transform-origin:0 22px;transform:scaleY(1.04);">CH 1</span>
<span class="t" style="left:1708.54px;top:1483.00px;font-size:27px;color:#e4e5e9;letter-spacing:-0.800px;transform-origin:0 22px;transform:scaleY(1.04);">CH 2</span>
<span class="t" style="left:1892.34px;top:1483.00px;font-size:27px;color:#e4e5e9;letter-spacing:-1.733px;transform-origin:0 22px;transform:scaleY(1.04);">CH 1</span>
<span class="t" style="left:1956.34px;top:1483.00px;font-size:27px;color:#e4e5e9;letter-spacing:-0.667px;transform-origin:0 22px;transform:scaleY(1.04);">CH 2</span>
<span class="t" style="left:2022.49px;top:1483.00px;font-size:27px;color:#8595a3;letter-spacing:-0.188px;transform-origin:0 22px;transform:scaleY(1.04);">Trigger</span>
<div class="b" style="left:1627.99px;top:1534.80px;width:196.80px;height:4.40px;background:#787878;"></div>
<div class="b" style="left:1892.99px;top:1534.80px;width:254.70px;height:4.40px;background:#787878;"></div>
<div class="b" style="left:1643.29px;top:1560.90px;width:109.20px;height:109.20px;background:#65343e;border:4.7px solid #e4e5e9;border-radius:50%;box-sizing:border-box;"></div>
<div class="b" style="left:1681.69px;top:1598.70px;width:35.40px;height:35.40px;background:#e30613;border-radius:50%;"></div>
<div class="b" style="left:1769.69px;top:1560.90px;width:109.20px;height:109.20px;background:#213240;border:4.7px solid #e4e5e9;border-radius:50%;box-sizing:border-box;"></div>
<div class="b" style="left:1809.89px;top:1601.00px;width:11.00px;height:31.00px;background:#e4e5e9;"></div>
<div class="b" style="left:1829.99px;top:1601.00px;width:11.00px;height:31.00px;background:#e4e5e9;"></div>
<div class="b" style="left:1896.59px;top:1560.90px;width:109.20px;height:109.20px;background:#213240;border:4.7px solid #e4e5e9;border-radius:50%;box-sizing:border-box;"></div>
<div class="b" style="left:1936.89px;top:1601.00px;width:30.80px;height:31.00px;background:#e4e5e9;"></div>
<div class="b" style="left:2022.79px;top:1560.90px;width:109.20px;height:109.20px;background:#213240;border:4.7px solid #e4e5e9;border-radius:50%;box-sizing:border-box;"></div>
<svg class="b" style="left:2056.69px;top:1594.20px" width="44.6" height="44.6" viewBox="0 0 44.6 44.6"><circle cx="22.3" cy="22.3" r="22.3" fill="#e30613"/><path d="M11.5 19.95 H22.8 V12 L33.3 22.3 L22.8 32.6 V24.65 H11.5 Z" fill="#213240"/></svg>
<span class="t" style="left:1643.19px;top:1713.00px;font-size:54px;color:#e4e5e9;letter-spacing:-0.675px;">00:00:25</span>
<div class="b" style="left:1889.99px;top:1710.00px;width:242.00px;height:59.50px;border:2px solid #e4e5e9;box-sizing:border-box;"></div>
<div class="b" style="left:2080.49px;top:1710.00px;width:2.00px;height:59.50px;background:#e4e5e9;"></div>
<svg class="b" style="left:1900.99px;top:1718px" width="40" height="42" viewBox="0 0 40 42"><path d="M12.2 9.5 L21.8 23.8 L12.2 38 L2.5 23.8 Z" fill="#e4e5e9"/><path d="M26 3 V17 M19 10 H33" stroke="#e4e5e9" stroke-width="2.6" fill="none"/></svg>
<span class="t" style="left:1946.22px;top:1726.00px;font-size:29.5px;color:#e4e5e9;letter-spacing:-0.540px;transform-origin:0 25px;transform:scaleY(1.06);-webkit-text-stroke:0.4px #e4e5e9;">MARKER</span>
<svg class="b" style="left:2090.99px;top:1725px" width="30" height="30" viewBox="0 0 30 30"><path d="M4.2 5.7 L13 14.5 L4.2 23.3 M16.7 5.7 L25.5 14.5 L16.7 23.3" fill="none" stroke="#e8979c" stroke-width="4" stroke-linecap="round"/></svg>
<div class="b" style="left:2157.32px;top:132.00px;width:539.33px;height:1664.00px;background:#000;"></div>
<div class="b" style="left:2160.32px;top:135.00px;width:533.33px;height:189.30px;background:#364554;"></div>
<div class="b" style="left:2160.32px;top:327.00px;width:533.33px;height:1355.80px;background:#213240;"></div>
<div class="b" style="left:2160.32px;top:1686.00px;width:533.33px;height:110.00px;background:#364554;"></div>
<span class="t" style="left:2177.75px;top:160.00px;font-size:66.5px;color:#e4e5e9;letter-spacing:-0.889px;transform-origin:0 56px;transform:scaleY(1.04);">Recorder</span>
<span class="t" style="left:2462.28px;top:160.00px;font-size:66.5px;color:#e4e5e9;transform-origin:0 56px;transform:scaleY(1.04);">5</span>
<span class="t" style="left:2180.95px;top:264.00px;font-size:29.5px;color:#8595a3;letter-spacing:0.170px;transform-origin:0 25px;transform:scaleY(1.04);"><span style="text-decoration:underline;text-decoration-thickness:2px;text-underline-offset:3px">R3LAY WDM Driver 5 (Lawo R</span>...</span>
<svg class="b" style="left:2643.32px;top:266px" width="30" height="27" viewBox="0 0 30 27"><path d="M4.2 5.2 L12.5 13.5 L4.2 21.8 M16.7 5.2 L25 13.5 L16.7 21.8" fill="none" stroke="#8595a3" stroke-width="4.2" stroke-linecap="round"/></svg>
<span class="t" style="left:2171.39px;top:369.00px;font-size:31px;color:#e4e5e9;letter-spacing:0.136px;transform-origin:0 26px;transform:scaleY(1.04);">Table Name</span>
<div class="b" style="left:2171.32px;top:404.30px;width:511.00px;height:63.70px;background:#131e25;border:2px solid #858585;border-radius:6px;box-sizing:border-box;"></div>
<span class="t" style="left:2193.10px;top:421.00px;font-size:31px;color:#8c8c8c;letter-spacing:-0.202px;transform-origin:0 26px;transform:scaleY(1.04);">Turing_Recording</span>
<svg class="b" style="left:2649.32px;top:428.5px" width="24" height="18" viewBox="0 0 24 18"><path d="M3 4 L11.5 12.5 L20 4" fill="none" stroke="#9a9a9a" stroke-width="3"/></svg>
<span class="t" style="left:2171.39px;top:498.00px;font-size:31px;color:#e4e5e9;letter-spacing:0.806px;transform-origin:0 26px;transform:scaleY(1.04);">Title</span>
<div class="b" style="left:2171.32px;top:533.50px;width:396.00px;height:56.20px;background:#131e25;border:2px solid #34485a;border-radius:6px;box-sizing:border-box;"></div>
<span class="t" style="left:2185.02px;top:547.00px;font-size:31.5px;color:#e4e5e9;letter-spacing:0.323px;transform-origin:0 26px;transform:scaleY(1.04);">Neil Armstrong</span>
<div class="b" style="left:2612.72px;top:529.30px;width:69.40px;height:60.40px;background:#131e25;border:2px solid #34485a;border-radius:7px;box-sizing:border-box;"></div>
<svg class="b" style="left:2625.62px;top:537.90px" width="46" height="42" viewBox="-1 -6 46 42"><rect x="0" y="0" width="35.4" height="34.5" fill="#e4e5e9"/><rect x="3" y="3.4000000000000004" width="5.6" height="5.6" fill="#1a2230"/><path d="M4 6.1000000000000005 l1.4 1.6 l2.4 -3.2" stroke="#e4e5e9" stroke-width="1" fill="none"/><rect x="10" y="5.9" width="21.5" height="1.1" fill="#50586a"/><rect x="3" y="10.5" width="5.6" height="5.6" fill="#1a2230"/><path d="M4 13.2 l1.4 1.6 l2.4 -3.2" stroke="#e4e5e9" stroke-width="1" fill="none"/><rect x="10" y="13.0" width="21.5" height="1.1" fill="#50586a"/><rect x="3" y="17.9" width="5.6" height="5.6" fill="#1a2230"/><path d="M4 20.599999999999998 l1.4 1.6 l2.4 -3.2" stroke="#e4e5e9" stroke-width="1" fill="none"/><rect x="10" y="20.4" width="21.5" height="1.1" fill="#50586a"/><rect x="3" y="25.4" width="5.6" height="5.6" fill="#1a2230"/><path d="M4 28.099999999999998 l1.4 1.6 l2.4 -3.2" stroke="#e4e5e9" stroke-width="1" fill="none"/><rect x="10" y="27.9" width="21.5" height="1.1" fill="#50586a"/><circle cx="31.7" cy="3.4" r="5.6" fill="#131e25" stroke="#e4e5e9" stroke-width="2"/><path d="M35.8 7.6 L41.6 12" stroke="#e4e5e9" stroke-width="3" stroke-linecap="round"/></svg>
<div class="b" style="left:2181.92px;top:624.00px;width:69.70px;height:37.80px;background:#131e25;border-radius:19px;"></div>
<div class="b" style="left:2186.92px;top:627.90px;width:29.60px;height:29.60px;background:#8595a3;border-radius:50%;"></div>
<span class="t" style="left:2261.82px;top:628.00px;font-size:31.5px;color:#e4e5e9;letter-spacing:0.650px;transform-origin:0 26px;transform:scaleY(1.04);">Monitor</span>
<div class="b" style="left:2197.32px;top:694.80px;width:11.00px;height:754.00px;background:#2aa0c4;"></div>
<div class="b" style="left:2169.52px;top:1165.40px;width:66.60px;height:66.60px;background:#e4e5e9;border:5.6px solid #2aa0c4;border-radius:50%;box-sizing:border-box;"></div>
<div class="b" style="left:2274.22px;top:694.80px;width:11.00px;height:754.00px;background:#2aa0c4;"></div>
<div class="b" style="left:2246.42px;top:1165.40px;width:66.60px;height:66.60px;background:#e4e5e9;border:5.6px solid #2aa0c4;border-radius:50%;box-sizing:border-box;"></div>
<span class="t" style="left:2328.72px;top:715.00px;font-size:31px;color:#e4e5e9;letter-spacing:0.575px;">+6</span>
<span class="t" style="left:2328.72px;top:915.00px;font-size:31px;color:#e4e5e9;letter-spacing:0.575px;">+3</span>
<span class="t" style="left:2347.30px;top:1059.00px;font-size:31px;color:#e4e5e9;">0</span>
<span class="t" style="left:2337.24px;top:1160.00px;font-size:31px;color:#e4e5e9;letter-spacing:-0.200px;">-3</span>
<span class="t" style="left:2337.24px;top:1232.00px;font-size:31px;color:#e4e5e9;letter-spacing:-0.200px;">-6</span>
<span class="t" style="left:2337.24px;top:1282.00px;font-size:31px;color:#e4e5e9;letter-spacing:-0.075px;">-9</span>
<span class="t" style="left:2319.95px;top:1319.00px;font-size:31px;color:#e4e5e9;letter-spacing:0.050px;">-12</span>
<span class="t" style="left:2332.39px;top:1394.97px;font-size:46px;color:#e4e5e9;">∞</span>
<span class="t" style="left:2322.64px;top:1403.00px;font-size:31px;color:#e4e5e9;">-</span>
<div class="b" style="left:2434.22px;top:694.60px;width:57.20px;height:768.50px;background:#aaaaaa;border-left:2px solid #4a5c6e;border-right:2px solid #4a5c6e;border-top:1px solid #141e27;border-bottom:1px solid #141e27;box-sizing:border-box;"></div>
<div class="b" style="left:2499.32px;top:694.60px;width:57.20px;height:768.50px;background:#aaaaaa;border-left:2px solid #4a5c6e;border-right:2px solid #4a5c6e;border-top:1px solid #141e27;border-bottom:1px solid #141e27;box-sizing:border-box;"></div>
<div class="b" style="left:2597.12px;top:694.80px;width:11.00px;height:720.20px;background:#146b87;"></div>
<div class="b" style="left:2569.32px;top:1382.20px;width:66.60px;height:66.60px;background:#e4e5e9;border:5.6px solid #146b87;border-radius:50%;box-sizing:border-box;"></div>
<span class="t" style="left:2669.60px;top:715.00px;font-size:31px;color:#e4e5e9;">0</span>
<span class="t" style="left:2659.65px;top:916.00px;font-size:31px;color:#e4e5e9;letter-spacing:-0.300px;">-3</span>
<span class="t" style="left:2659.65px;top:1060.00px;font-size:31px;color:#e4e5e9;letter-spacing:-0.300px;">-6</span>
<span class="t" style="left:2642.25px;top:1233.00px;font-size:31px;color:#e4e5e9;letter-spacing:0.050px;">-12</span>
<span class="t" style="left:2654.69px;top:1394.97px;font-size:46px;color:#e4e5e9;">∞</span>
<span class="t" style="left:2644.95px;top:1403.00px;font-size:31px;color:#e4e5e9;">-</span>
<span class="t" style="left:2169.67px;top:1483.00px;font-size:27px;color:#e4e5e9;letter-spacing:-1.933px;transform-origin:0 22px;transform:scaleY(1.04);">CH 1</span>
<span class="t" style="left:2247.87px;top:1483.00px;font-size:27px;color:#e4e5e9;letter-spacing:-0.800px;transform-origin:0 22px;transform:scaleY(1.04);">CH 2</span>
<span class="t" style="left:2431.67px;top:1483.00px;font-size:27px;color:#e4e5e9;letter-spacing:-1.733px;transform-origin:0 22px;transform:scaleY(1.04);">CH 1</span>
<span class="t" style="left:2495.67px;top:1483.00px;font-size:27px;color:#e4e5e9;letter-spacing:-0.667px;transform-origin:0 22px;transform:scaleY(1.04);">CH 2</span>
<span class="t" style="left:2561.82px;top:1483.00px;font-size:27px;color:#8595a3;letter-spacing:-0.188px;transform-origin:0 22px;transform:scaleY(1.04);">Trigger</span>
<div class="b" style="left:2167.32px;top:1534.80px;width:196.80px;height:4.40px;background:#787878;"></div>
<div class="b" style="left:2432.32px;top:1534.80px;width:254.70px;height:4.40px;background:#787878;"></div>
<div class="b" style="left:2182.62px;top:1560.90px;width:109.20px;height:109.20px;background:#65343e;border:4.7px solid #e4e5e9;border-radius:50%;box-sizing:border-box;"></div>
<div class="b" style="left:2221.02px;top:1598.70px;width:35.40px;height:35.40px;background:#e30613;border-radius:50%;"></div>
<div class="b" style="left:2309.02px;top:1560.90px;width:109.20px;height:109.20px;background:#213240;border:4.7px solid #e4e5e9;border-radius:50%;box-sizing:border-box;"></div>
<svg class="b" style="left:2351.92px;top:1596.4px" width="32" height="38" viewBox="0 0 32 38"><path d="M0 0 L31.4 19 L0 38 Z" fill="#00843d"/></svg>
<div class="b" style="left:2435.92px;top:1560.90px;width:109.20px;height:109.20px;background:#213240;border:4.7px solid #e4e5e9;border-radius:50%;box-sizing:border-box;"></div>
<div class="b" style="left:2476.22px;top:1601.00px;width:30.80px;height:31.00px;background:#e4e5e9;"></div>
<div class="b" style="left:2562.12px;top:1560.90px;width:109.20px;height:109.20px;background:#213240;border:4.7px solid #5c7080;border-radius:50%;box-sizing:border-box;"></div>
<svg class="b" style="left:2596.02px;top:1594.20px" width="44.6" height="44.6" viewBox="0 0 44.6 44.6"><circle cx="22.3" cy="22.3" r="22.3" fill="#5c7080"/><path d="M11.5 19.95 H22.8 V12 L33.3 22.3 L22.8 32.6 V24.65 H11.5 Z" fill="#213240"/></svg>
<span class="t" style="left:2182.52px;top:1713.00px;font-size:54px;color:#e4e5e9;letter-spacing:-0.675px;">00:00:00</span>
<div class="b" style="left:2429.32px;top:1710.00px;width:242.00px;height:59.50px;border:2px solid #8595a3;box-sizing:border-box;"></div>
<div class="b" style="left:2619.82px;top:1710.00px;width:2.00px;height:59.50px;background:#8595a3;"></div>
<svg class="b" style="left:2440.32px;top:1718px" width="40" height="42" viewBox="0 0 40 42"><path d="M12.2 9.5 L21.8 23.8 L12.2 38 L2.5 23.8 Z" fill="#8595a3"/><path d="M26 3 V17 M19 10 H33" stroke="#8595a3" stroke-width="2.6" fill="none"/></svg>
<span class="t" style="left:2485.55px;top:1726.00px;font-size:29.5px;color:#8595a3;letter-spacing:-0.540px;transform-origin:0 25px;transform:scaleY(1.06);-webkit-text-stroke:0.4px #8595a3;">MARKER</span>
<svg class="b" style="left:2630.32px;top:1725px" width="30" height="30" viewBox="0 0 30 30"><path d="M4.2 5.7 L13 14.5 L4.2 23.3 M16.7 5.7 L25.5 14.5 L16.7 23.3" fill="none" stroke="#72828f" stroke-width="4" stroke-linecap="round"/></svg>
<div class="b" style="left:2696.65px;top:132.00px;width:539.33px;height:1664.00px;background:#000;"></div>
<div class="b" style="left:2699.65px;top:135.00px;width:533.33px;height:189.30px;background:#364554;"></div>
<div class="b" style="left:2699.65px;top:327.00px;width:533.33px;height:1355.80px;background:#213240;"></div>
<div class="b" style="left:2699.65px;top:1686.00px;width:533.33px;height:110.00px;background:#d20a11;"></div>
<span class="t" style="left:2717.08px;top:160.00px;font-size:66.5px;color:#e4e5e9;letter-spacing:-0.889px;transform-origin:0 56px;transform:scaleY(1.04);">Recorder</span>
<span class="t" style="left:3001.30px;top:160.00px;font-size:66.5px;color:#e4e5e9;transform-origin:0 56px;transform:scaleY(1.04);">6</span>
<span class="t" style="left:2720.28px;top:264.00px;font-size:29.5px;color:#8595a3;letter-spacing:0.170px;transform-origin:0 25px;transform:scaleY(1.04);"><span style="text-decoration:underline;text-decoration-thickness:2px;text-underline-offset:3px">R3LAY WDM Driver 6 (Lawo R</span>...</span>
<svg class="b" style="left:3182.65px;top:266px" width="30" height="27" viewBox="0 0 30 27"><path d="M4.2 5.2 L12.5 13.5 L4.2 21.8 M16.7 5.2 L25 13.5 L16.7 21.8" fill="none" stroke="#8595a3" stroke-width="4.2" stroke-linecap="round"/></svg>
<span class="t" style="left:2710.72px;top:369.00px;font-size:31px;color:#e4e5e9;letter-spacing:0.136px;transform-origin:0 26px;transform:scaleY(1.04);">Table Name</span>
<div class="b" style="left:2710.65px;top:404.30px;width:511.00px;height:63.70px;background:#131e25;border:2px solid #858585;border-radius:6px;box-sizing:border-box;"></div>
<span class="t" style="left:2732.43px;top:421.00px;font-size:31px;color:#8c8c8c;letter-spacing:-0.202px;transform-origin:0 26px;transform:scaleY(1.04);">Turing_Recording</span>
<svg class="b" style="left:3188.65px;top:428.5px" width="24" height="18" viewBox="0 0 24 18"><path d="M3 4 L11.5 12.5 L20 4" fill="none" stroke="#9a9a9a" stroke-width="3"/></svg>
<span class="t" style="left:2710.72px;top:498.00px;font-size:31px;color:#e4e5e9;letter-spacing:0.806px;transform-origin:0 26px;transform:scaleY(1.04);">Title</span>
<div class="b" style="left:2710.65px;top:533.50px;width:396.00px;height:56.20px;background:#131e25;border:2px solid #34485a;border-radius:6px;box-sizing:border-box;"></div>
<span class="t" style="left:2724.35px;top:547.00px;font-size:31.5px;color:#e4e5e9;letter-spacing:-0.227px;transform-origin:0 26px;transform:scaleY(1.04);">Richard M. Nixon</span>
<div class="b" style="left:3152.05px;top:529.30px;width:69.40px;height:60.40px;background:#131e25;border:2px solid #34485a;border-radius:7px;box-sizing:border-box;"></div>
<svg class="b" style="left:3164.95px;top:537.90px" width="46" height="42" viewBox="-1 -6 46 42"><rect x="0" y="0" width="35.4" height="34.5" fill="#e4e5e9"/><rect x="3" y="3.4000000000000004" width="5.6" height="5.6" fill="#1a2230"/><path d="M4 6.1000000000000005 l1.4 1.6 l2.4 -3.2" stroke="#e4e5e9" stroke-width="1" fill="none"/><rect x="10" y="5.9" width="21.5" height="1.1" fill="#50586a"/><rect x="3" y="10.5" width="5.6" height="5.6" fill="#1a2230"/><path d="M4 13.2 l1.4 1.6 l2.4 -3.2" stroke="#e4e5e9" stroke-width="1" fill="none"/><rect x="10" y="13.0" width="21.5" height="1.1" fill="#50586a"/><rect x="3" y="17.9" width="5.6" height="5.6" fill="#1a2230"/><path d="M4 20.599999999999998 l1.4 1.6 l2.4 -3.2" stroke="#e4e5e9" stroke-width="1" fill="none"/><rect x="10" y="20.4" width="21.5" height="1.1" fill="#50586a"/><rect x="3" y="25.4" width="5.6" height="5.6" fill="#1a2230"/><path d="M4 28.099999999999998 l1.4 1.6 l2.4 -3.2" stroke="#e4e5e9" stroke-width="1" fill="none"/><rect x="10" y="27.9" width="21.5" height="1.1" fill="#50586a"/><circle cx="31.7" cy="3.4" r="5.6" fill="#131e25" stroke="#e4e5e9" stroke-width="2"/><path d="M35.8 7.6 L41.6 12" stroke="#e4e5e9" stroke-width="3" stroke-linecap="round"/></svg>
<div class="b" style="left:2721.25px;top:624.00px;width:69.70px;height:37.80px;background:#131e25;border-radius:19px;"></div>
<div class="b" style="left:2726.25px;top:627.90px;width:29.60px;height:29.60px;background:#8595a3;border-radius:50%;"></div>
<span class="t" style="left:2801.15px;top:628.00px;font-size:31.5px;color:#e4e5e9;letter-spacing:0.650px;transform-origin:0 26px;transform:scaleY(1.04);">Monitor</span>
<div class="b" style="left:2736.65px;top:694.80px;width:11.00px;height:754.00px;background:#2aa0c4;"></div>
<div class="b" style="left:2708.85px;top:896.70px;width:66.60px;height:66.60px;background:#e4e5e9;border:5.6px solid #2aa0c4;border-radius:50%;box-sizing:border-box;"></div>
<div class="b" style="left:2813.55px;top:694.80px;width:11.00px;height:754.00px;background:#2aa0c4;"></div>
<div class="b" style="left:2785.75px;top:896.70px;width:66.60px;height:66.60px;background:#e4e5e9;border:5.6px solid #2aa0c4;border-radius:50%;box-sizing:border-box;"></div>
<span class="t" style="left:2868.05px;top:715.00px;font-size:31px;color:#e4e5e9;letter-spacing:0.575px;">+6</span>
<span class="t" style="left:2868.05px;top:915.00px;font-size:31px;color:#e4e5e9;letter-spacing:0.575px;">+3</span>
<span class="t" style="left:2886.62px;top:1059.00px;font-size:31px;color:#e4e5e9;">0</span>
<span class="t" style="left:2876.57px;top:1160.00px;font-size:31px;color:#e4e5e9;letter-spacing:-0.200px;">-3</span>
<span class="t" style="left:2876.57px;top:1232.00px;font-size:31px;color:#e4e5e9;letter-spacing:-0.200px;">-6</span>
<span class="t" style="left:2876.57px;top:1282.00px;font-size:31px;color:#e4e5e9;letter-spacing:-0.075px;">-9</span>
<span class="t" style="left:2859.28px;top:1319.00px;font-size:31px;color:#e4e5e9;letter-spacing:0.050px;">-12</span>
<span class="t" style="left:2871.72px;top:1394.97px;font-size:46px;color:#e4e5e9;">∞</span>
<span class="t" style="left:2861.97px;top:1403.00px;font-size:31px;color:#e4e5e9;">-</span>
<div class="b" style="left:2973.55px;top:694.60px;width:57.20px;height:768.50px;background:#aaaaaa;border-left:2px solid #4a5c6e;border-right:2px solid #4a5c6e;border-top:1px solid #141e27;border-bottom:1px solid #141e27;box-sizing:border-box;"></div>
<div class="b" style="left:2975.55px;top:1152.90px;width:53.20px;height:307.90px;background:#5eb004;"></div>
<div class="b" style="left:3038.65px;top:694.60px;width:57.20px;height:768.50px;background:#aaaaaa;border-left:2px solid #4a5c6e;border-right:2px solid #4a5c6e;border-top:1px solid #141e27;border-bottom:1px solid #141e27;box-sizing:border-box;"></div>
<div class="b" style="left:3040.65px;top:1152.90px;width:53.20px;height:307.90px;background:#5eb004;"></div>
<div class="b" style="left:3136.45px;top:694.80px;width:11.00px;height:720.20px;background:#aaaaaa;"></div>
<div class="b" style="left:3108.65px;top:1382.20px;width:66.60px;height:66.60px;background:#213240;border:5.6px solid #aaaaaa;border-radius:50%;box-sizing:border-box;"></div>
<span class="t" style="left:3208.93px;top:715.00px;font-size:31px;color:#e4e5e9;">0</span>
<span class="t" style="left:3198.98px;top:916.00px;font-size:31px;color:#e4e5e9;letter-spacing:-0.300px;">-3</span>
<span class="t" style="left:3198.98px;top:1060.00px;font-size:31px;color:#e4e5e9;letter-spacing:-0.300px;">-6</span>
<span class="t" style="left:3181.58px;top:1233.00px;font-size:31px;color:#e4e5e9;letter-spacing:0.050px;">-12</span>
<span class="t" style="left:3194.02px;top:1394.97px;font-size:46px;color:#e4e5e9;">∞</span>
<span class="t" style="left:3184.28px;top:1403.00px;font-size:31px;color:#e4e5e9;">-</span>
<span class="t" style="left:2709.00px;top:1483.00px;font-size:27px;color:#e4e5e9;letter-spacing:-1.933px;transform-origin:0 22px;transform:scaleY(1.04);">CH 1</span>
<span class="t" style="left:2787.20px;top:1483.00px;font-size:27px;color:#e4e5e9;letter-spacing:-0.800px;transform-origin:0 22px;transform:scaleY(1.04);">CH 2</span>
<span class="t" style="left:2971.00px;top:1483.00px;font-size:27px;color:#e4e5e9;letter-spacing:-1.733px;transform-origin:0 22px;transform:scaleY(1.04);">CH 1</span>
<span class="t" style="left:3035.00px;top:1483.00px;font-size:27px;color:#e4e5e9;letter-spacing:-0.667px;transform-origin:0 22px;transform:scaleY(1.04);">CH 2</span>
<span class="t" style="left:3101.15px;top:1483.00px;font-size:27px;color:#8595a3;letter-spacing:-0.188px;transform-origin:0 22px;transform:scaleY(1.04);">Trigger</span>
<div class="b" style="left:2706.65px;top:1534.80px;width:196.80px;height:4.40px;background:#787878;"></div>
<div class="b" style="left:2971.65px;top:1534.80px;width:254.70px;height:4.40px;background:#787878;"></div>
<div class="b" style="left:2721.95px;top:1560.90px;width:109.20px;height:109.20px;background:#65343e;border:4.7px solid #e4e5e9;border-radius:50%;box-sizing:border-box;"></div>
<div class="b" style="left:2760.35px;top:1598.70px;width:35.40px;height:35.40px;background:#e30613;border-radius:50%;"></div>
<div class="b" style="left:2848.35px;top:1560.90px;width:109.20px;height:109.20px;background:#213240;border:4.7px solid #e4e5e9;border-radius:50%;box-sizing:border-box;"></div>
<div class="b" style="left:2888.55px;top:1601.00px;width:11.00px;height:31.00px;background:#e4e5e9;"></div>
<div class="b" style="left:2908.65px;top:1601.00px;width:11.00px;height:31.00px;background:#e4e5e9;"></div>
<div class="b" style="left:2975.25px;top:1560.90px;width:109.20px;height:109.20px;background:#213240;border:4.7px solid #e4e5e9;border-radius:50%;box-sizing:border-box;"></div>
<div class="b" style="left:3015.55px;top:1601.00px;width:30.80px;height:31.00px;background:#e4e5e9;"></div>
<div class="b" style="left:3101.45px;top:1560.90px;width:109.20px;height:109.20px;background:#213240;border:4.7px solid #e4e5e9;border-radius:50%;box-sizing:border-box;"></div>
<svg class="b" style="left:3135.35px;top:1594.20px" width="44.6" height="44.6" viewBox="0 0 44.6 44.6"><circle cx="22.3" cy="22.3" r="22.3" fill="#e30613"/><path d="M11.5 19.95 H22.8 V12 L33.3 22.3 L22.8 32.6 V24.65 H11.5 Z" fill="#213240"/></svg>
<span class="t" style="left:2721.85px;top:1713.00px;font-size:54px;color:#e4e5e9;letter-spacing:-0.675px;">00:00:31</span>
<div class="b" style="left:2968.65px;top:1710.00px;width:242.00px;height:59.50px;border:2px solid #e4e5e9;box-sizing:border-box;"></div>
<div class="b" style="left:3159.15px;top:1710.00px;width:2.00px;height:59.50px;background:#e4e5e9;"></div>
<svg class="b" style="left:2979.65px;top:1718px" width="40" height="42" viewBox="0 0 40 42"><path d="M12.2 9.5 L21.8 23.8 L12.2 38 L2.5 23.8 Z" fill="#e4e5e9"/><path d="M26 3 V17 M19 10 H33" stroke="#e4e5e9" stroke-width="2.6" fill="none"/></svg>
<span class="t" style="left:3024.88px;top:1726.00px;font-size:29.5px;color:#e4e5e9;letter-spacing:-0.540px;transform-origin:0 25px;transform:scaleY(1.06);-webkit-text-stroke:0.4px #e4e5e9;">MARKER</span>
<svg class="b" style="left:3169.65px;top:1725px" width="30" height="30" viewBox="0 0 30 30"><path d="M4.2 5.7 L13 14.5 L4.2 23.3 M16.7 5.7 L25.5 14.5 L16.7 23.3" fill="none" stroke="#e8979c" stroke-width="4" stroke-linecap="round"/></svg>
<div class="b" style="left:3235.98px;top:132.00px;width:539.33px;height:1664.00px;background:#000;"></div>
<div class="b" style="left:3238.98px;top:135.00px;width:533.33px;height:189.30px;background:#364554;"></div>
<div class="b" style="left:3238.98px;top:327.00px;width:533.33px;height:1355.80px;background:#213240;"></div>
<div class="b" style="left:3238.98px;top:1686.00px;width:533.33px;height:110.00px;background:#364554;"></div>
<span class="t" style="left:3256.41px;top:160.00px;font-size:66.5px;color:#e4e5e9;letter-spacing:-0.889px;transform-origin:0 56px;transform:scaleY(1.04);">Recorder</span>
<span class="t" style="left:3540.82px;top:160.00px;font-size:66.5px;color:#e4e5e9;transform-origin:0 56px;transform:scaleY(1.04);">7</span>
<span class="t" style="left:3259.61px;top:264.00px;font-size:29.5px;color:#8595a3;letter-spacing:0.170px;transform-origin:0 25px;transform:scaleY(1.04);"><span style="text-decoration:underline;text-decoration-thickness:2px;text-underline-offset:3px">R3LAY WDM Driver 7 (Lawo R</span>...</span>
<svg class="b" style="left:3721.98px;top:266px" width="30" height="27" viewBox="0 0 30 27"><path d="M4.2 5.2 L12.5 13.5 L4.2 21.8 M16.7 5.2 L25 13.5 L16.7 21.8" fill="none" stroke="#8595a3" stroke-width="4.2" stroke-linecap="round"/></svg>
<span class="t" style="left:3250.06px;top:369.00px;font-size:31px;color:#e4e5e9;letter-spacing:0.136px;transform-origin:0 26px;transform:scaleY(1.04);">Table Name</span>
<div class="b" style="left:3249.98px;top:404.30px;width:511.00px;height:63.70px;background:#131e25;border:2px solid #858585;border-radius:6px;box-sizing:border-box;"></div>
<span class="t" style="left:3271.76px;top:421.00px;font-size:31px;color:#8c8c8c;letter-spacing:-0.202px;transform-origin:0 26px;transform:scaleY(1.04);">Turing_Recording</span>
<svg class="b" style="left:3727.98px;top:428.5px" width="24" height="18" viewBox="0 0 24 18"><path d="M3 4 L11.5 12.5 L20 4" fill="none" stroke="#9a9a9a" stroke-width="3"/></svg>
<span class="t" style="left:3250.06px;top:498.00px;font-size:31px;color:#e4e5e9;letter-spacing:0.806px;transform-origin:0 26px;transform:scaleY(1.04);">Title</span>
<div class="b" style="left:3249.98px;top:533.50px;width:396.00px;height:56.20px;background:#131e25;border:2px solid #34485a;border-radius:6px;box-sizing:border-box;"></div>
<span class="t" style="left:3263.68px;top:547.00px;font-size:31.5px;color:#e4e5e9;letter-spacing:-0.681px;transform-origin:0 26px;transform:scaleY(1.04);">Ronald Reagan</span>
<div class="b" style="left:3691.38px;top:529.30px;width:69.40px;height:60.40px;background:#131e25;border:2px solid #34485a;border-radius:7px;box-sizing:border-box;"></div>
<svg class="b" style="left:3704.28px;top:537.90px" width="46" height="42" viewBox="-1 -6 46 42"><rect x="0" y="0" width="35.4" height="34.5" fill="#e4e5e9"/><rect x="3" y="3.4000000000000004" width="5.6" height="5.6" fill="#1a2230"/><path d="M4 6.1000000000000005 l1.4 1.6 l2.4 -3.2" stroke="#e4e5e9" stroke-width="1" fill="none"/><rect x="10" y="5.9" width="21.5" height="1.1" fill="#50586a"/><rect x="3" y="10.5" width="5.6" height="5.6" fill="#1a2230"/><path d="M4 13.2 l1.4 1.6 l2.4 -3.2" stroke="#e4e5e9" stroke-width="1" fill="none"/><rect x="10" y="13.0" width="21.5" height="1.1" fill="#50586a"/><rect x="3" y="17.9" width="5.6" height="5.6" fill="#1a2230"/><path d="M4 20.599999999999998 l1.4 1.6 l2.4 -3.2" stroke="#e4e5e9" stroke-width="1" fill="none"/><rect x="10" y="20.4" width="21.5" height="1.1" fill="#50586a"/><rect x="3" y="25.4" width="5.6" height="5.6" fill="#1a2230"/><path d="M4 28.099999999999998 l1.4 1.6 l2.4 -3.2" stroke="#e4e5e9" stroke-width="1" fill="none"/><rect x="10" y="27.9" width="21.5" height="1.1" fill="#50586a"/><circle cx="31.7" cy="3.4" r="5.6" fill="#131e25" stroke="#e4e5e9" stroke-width="2"/><path d="M35.8 7.6 L41.6 12" stroke="#e4e5e9" stroke-width="3" stroke-linecap="round"/></svg>
<div class="b" style="left:3260.58px;top:624.00px;width:69.70px;height:37.80px;background:#131e25;border-radius:19px;"></div>
<div class="b" style="left:3265.58px;top:627.90px;width:29.60px;height:29.60px;background:#8595a3;border-radius:50%;"></div>
<span class="t" style="left:3340.48px;top:628.00px;font-size:31.5px;color:#e4e5e9;letter-spacing:0.650px;transform-origin:0 26px;transform:scaleY(1.04);">Monitor</span>
<div class="b" style="left:3275.98px;top:694.80px;width:11.00px;height:754.00px;background:#2aa0c4;"></div>
<div class="b" style="left:3248.18px;top:1038.70px;width:66.60px;height:66.60px;background:#e4e5e9;border:5.6px solid #2aa0c4;border-radius:50%;box-sizing:border-box;"></div>
<div class="b" style="left:3352.88px;top:694.80px;width:11.00px;height:754.00px;background:#2aa0c4;"></div>
<div class="b" style="left:3325.08px;top:1038.70px;width:66.60px;height:66.60px;background:#e4e5e9;border:5.6px solid #2aa0c4;border-radius:50%;box-sizing:border-box;"></div>
<span class="t" style="left:3407.38px;top:715.00px;font-size:31px;color:#e4e5e9;letter-spacing:0.575px;">+6</span>
<span class="t" style="left:3407.38px;top:915.00px;font-size:31px;color:#e4e5e9;letter-spacing:0.575px;">+3</span>
<span class="t" style="left:3425.96px;top:1059.00px;font-size:31px;color:#e4e5e9;">0</span>
<span class="t" style="left:3415.91px;top:1160.00px;font-size:31px;color:#e4e5e9;letter-spacing:-0.200px;">-3</span>
<span class="t" style="left:3415.91px;top:1232.00px;font-size:31px;color:#e4e5e9;letter-spacing:-0.200px;">-6</span>
<span class="t" style="left:3415.91px;top:1282.00px;font-size:31px;color:#e4e5e9;letter-spacing:-0.075px;">-9</span>
<span class="t" style="left:3398.61px;top:1319.00px;font-size:31px;color:#e4e5e9;letter-spacing:0.050px;">-12</span>
<span class="t" style="left:3411.05px;top:1394.97px;font-size:46px;color:#e4e5e9;">∞</span>
<span class="t" style="left:3401.31px;top:1403.00px;font-size:31px;color:#e4e5e9;">-</span>
<div class="b" style="left:3512.88px;top:694.60px;width:57.20px;height:768.50px;background:#aaaaaa;border-left:2px solid #4a5c6e;border-right:2px solid #4a5c6e;border-top:1px solid #141e27;border-bottom:1px solid #141e27;box-sizing:border-box;"></div>
<div class="b" style="left:3514.88px;top:1216.90px;width:53.20px;height:243.90px;background:#5eb004;"></div>
<div class="b" style="left:3514.88px;top:1139.40px;width:53.20px;height:15.60px;background:#5eb004;"></div>
<div class="b" style="left:3577.98px;top:694.60px;width:57.20px;height:768.50px;background:#aaaaaa;border-left:2px solid #4a5c6e;border-right:2px solid #4a5c6e;border-top:1px solid #141e27;border-bottom:1px solid #141e27;box-sizing:border-box;"></div>
<div class="b" style="left:3579.98px;top:1216.90px;width:53.20px;height:243.90px;background:#5eb004;"></div>
<div class="b" style="left:3579.98px;top:1139.40px;width:53.20px;height:15.60px;background:#5eb004;"></div>
<div class="b" style="left:3675.78px;top:694.80px;width:11.00px;height:720.20px;background:#146b87;"></div>
<div class="b" style="left:3647.98px;top:1382.20px;width:66.60px;height:66.60px;background:#e4e5e9;border:5.6px solid #146b87;border-radius:50%;box-sizing:border-box;"></div>
<span class="t" style="left:3748.26px;top:715.00px;font-size:31px;color:#e4e5e9;">0</span>
<span class="t" style="left:3738.31px;top:916.00px;font-size:31px;color:#e4e5e9;letter-spacing:-0.300px;">-3</span>
<span class="t" style="left:3738.31px;top:1060.00px;font-size:31px;color:#e4e5e9;letter-spacing:-0.300px;">-6</span>
<span class="t" style="left:3720.91px;top:1233.00px;font-size:31px;color:#e4e5e9;letter-spacing:0.050px;">-12</span>
<span class="t" style="left:3733.35px;top:1394.97px;font-size:46px;color:#e4e5e9;">∞</span>
<span class="t" style="left:3723.61px;top:1403.00px;font-size:31px;color:#e4e5e9;">-</span>
<span class="t" style="left:3248.33px;top:1483.00px;font-size:27px;color:#e4e5e9;letter-spacing:-1.933px;transform-origin:0 22px;transform:scaleY(1.04);">CH 1</span>
<span class="t" style="left:3326.53px;top:1483.00px;font-size:27px;color:#e4e5e9;letter-spacing:-0.800px;transform-origin:0 22px;transform:scaleY(1.04);">CH 2</span>
<span class="t" style="left:3510.33px;top:1483.00px;font-size:27px;color:#e4e5e9;letter-spacing:-1.733px;transform-origin:0 22px;transform:scaleY(1.04);">CH 1</span>
<span class="t" style="left:3574.33px;top:1483.00px;font-size:27px;color:#e4e5e9;letter-spacing:-0.667px;transform-origin:0 22px;transform:scaleY(1.04);">CH 2</span>
<span class="t" style="left:3640.48px;top:1483.00px;font-size:27px;color:#8595a3;letter-spacing:-0.188px;transform-origin:0 22px;transform:scaleY(1.04);">Trigger</span>
<div class="b" style="left:3245.98px;top:1534.80px;width:196.80px;height:4.40px;background:#787878;"></div>
<div class="b" style="left:3510.98px;top:1534.80px;width:254.70px;height:4.40px;background:#787878;"></div>
<div class="b" style="left:3261.28px;top:1560.90px;width:109.20px;height:109.20px;background:#65343e;border:4.7px solid #e4e5e9;border-radius:50%;box-sizing:border-box;"></div>
<div class="b" style="left:3299.68px;top:1598.70px;width:35.40px;height:35.40px;background:#e30613;border-radius:50%;"></div>
<div class="b" style="left:3387.68px;top:1560.90px;width:109.20px;height:109.20px;background:#213240;border:4.7px solid #e4e5e9;border-radius:50%;box-sizing:border-box;"></div>
<svg class="b" style="left:3430.58px;top:1596.4px" width="32" height="38" viewBox="0 0 32 38"><path d="M0 0 L31.4 19 L0 38 Z" fill="#00843d"/></svg>
<div class="b" style="left:3514.58px;top:1560.90px;width:109.20px;height:109.20px;background:#213240;border:4.7px solid #e4e5e9;border-radius:50%;box-sizing:border-box;"></div>
<div class="b" style="left:3554.88px;top:1601.00px;width:30.80px;height:31.00px;background:#e4e5e9;"></div>
<div class="b" style="left:3640.78px;top:1560.90px;width:109.20px;height:109.20px;background:#213240;border:4.7px solid #5c7080;border-radius:50%;box-sizing:border-box;"></div>
<svg class="b" style="left:3674.68px;top:1594.20px" width="44.6" height="44.6" viewBox="0 0 44.6 44.6"><circle cx="22.3" cy="22.3" r="22.3" fill="#5c7080"/><path d="M11.5 19.95 H22.8 V12 L33.3 22.3 L22.8 32.6 V24.65 H11.5 Z" fill="#213240"/></svg>
<span class="t" style="left:3261.18px;top:1713.00px;font-size:54px;color:#e4e5e9;letter-spacing:-0.675px;">00:00:00</span>
<div class="b" style="left:3507.98px;top:1710.00px;width:242.00px;height:59.50px;border:2px solid #8595a3;box-sizing:border-box;"></div>
<div class="b" style="left:3698.48px;top:1710.00px;width:2.00px;height:59.50px;background:#8595a3;"></div>
<svg class="b" style="left:3518.98px;top:1718px" width="40" height="42" viewBox="0 0 40 42"><path d="M12.2 9.5 L21.8 23.8 L12.2 38 L2.5 23.8 Z" fill="#8595a3"/><path d="M26 3 V17 M19 10 H33" stroke="#8595a3" stroke-width="2.6" fill="none"/></svg>
<span class="t" style="left:3564.21px;top:1726.00px;font-size:29.5px;color:#8595a3;letter-spacing:-0.540px;transform-origin:0 25px;transform:scaleY(1.06);-webkit-text-stroke:0.4px #8595a3;">MARKER</span>
<svg class="b" style="left:3708.98px;top:1725px" width="30" height="30" viewBox="0 0 30 30"><path d="M4.2 5.7 L13 14.5 L4.2 23.3 M16.7 5.7 L25.5 14.5 L16.7 23.3" fill="none" stroke="#72828f" stroke-width="4" stroke-linecap="round"/></svg>
<div class="b" style="left:3775.31px;top:132.00px;width:10.00px;height:1786.00px;background:#000;"></div>
<div class="b" style="left:3778.31px;top:135.00px;width:10.00px;height:189.30px;background:#364554;"></div>
<div class="b" style="left:3778.31px;top:327.00px;width:10.00px;height:1355.80px;background:#213240;"></div>
<div class="b" style="left:3778.31px;top:1686.00px;width:10.00px;height:110.00px;background:#364554;"></div>
<div class="b" style="left:1763.00px;top:1651.00px;width:440.00px;height:49.50px;background:#364554;border:1.3px solid #4d6377;box-sizing:border-box;"></div>
<span class="t" style="left:1776.50px;top:1660.00px;font-size:31px;color:#e4e5e9;letter-spacing:0.095px;transform-origin:0 26px;transform:scaleY(1.04);">Add marker at current position</span>
<svg class="b" style="left:2154px;top:1726px" width="42" height="50" viewBox="0 0 42 50"><path d="M41 4.4 L3.5 25.7 L41 46.6 Z" fill="#364554" stroke="#4f6579" stroke-width="2.2"/></svg>
<div class="b" style="left:2193.20px;top:1240.20px;width:825.60px;height:555.80px;background:#364554;border:2.2px solid #4b6176;box-sizing:border-box;box-shadow:0 0 18px 3px rgba(0,0,0,0.6);"></div>
<div class="b" style="left:2193.20px;top:1240.20px;width:825.60px;height:71.20px;background:#0a566e;border:2.2px solid #126a8a;box-sizing:border-box;"></div>
<span class="t" style="left:2215.50px;top:1260.00px;font-size:31px;color:#e4e5e9;letter-spacing:0.450px;transform-origin:0 26px;transform:scaleY(1.04);">Markers</span>
<svg class="b" style="left:2966px;top:1259px" width="34" height="32" viewBox="0 0 34 32"><path d="M14 5.6 L4.5 15.6 L14 25.6 M27.5 5.6 L18 15.6 L27.5 25.6" fill="none" stroke="#bdd3da" stroke-width="4" stroke-linecap="round"/></svg>
<span class="t" style="left:2217.47px;top:1347.00px;font-size:29.5px;color:#e4e5e9;letter-spacing:1.050px;-webkit-text-stroke:1.1px #e4e5e9;">00:00:22</span>
<div class="b" style="left:2363.80px;top:1341.50px;width:571.60px;height:52.50px;background:#131e25;border-radius:5px;"></div>
<div class="b" style="left:2362.10px;top:1335.10px;width:575.20px;height:60.90px;background:#131e25;border:4px solid #35b2db;border-radius:7px;box-sizing:border-box;"></div>
<div class="b" style="left:2378.80px;top:1347.20px;width:104.30px;height:37.70px;background:#0078d7;"></div>
<span class="t" style="left:2378.80px;top:1351.00px;font-size:31.5px;color:#ffffff;letter-spacing:0.443px;transform-origin:0 26px;transform:scaleY(1.04);">untitled</span>
<svg class="b" style="left:2960px;top:1345.1px" width="19.1" height="40" viewBox="0 0 19.1 40"><path d="M10.7 0 H22 V2.6 H9.4 Z M1.9 2.5 H22 V7.1 H1.9 Q0.9 7.1 0.9 6.1 V3.5 Q0.9 2.5 1.9 2.5 Z M3.5 9.1 H22 V36.7 H7.5 Q5.4 36.7 5.2 34.6 Z" fill="#e4e5e9"/></svg>
<span class="t" style="left:2217.47px;top:1452.00px;font-size:29.5px;color:#e4e5e9;letter-spacing:1.050px;-webkit-text-stroke:1.1px #e4e5e9;">00:00:22</span>
<div class="b" style="left:2363.80px;top:1443.20px;width:571.60px;height:52.50px;background:#131e25;border-radius:5px;"></div>
<span class="t" style="left:2376.30px;top:1454.00px;font-size:31.5px;color:#e4e5e9;letter-spacing:0.443px;transform-origin:0 26px;transform:scaleY(1.04);">untitled</span>
<svg class="b" style="left:2960px;top:1451.1px" width="19.1" height="40" viewBox="0 0 19.1 40"><path d="M10.7 0 H22 V2.6 H9.4 Z M1.9 2.5 H22 V7.1 H1.9 Q0.9 7.1 0.9 6.1 V3.5 Q0.9 2.5 1.9 2.5 Z M3.5 9.1 H22 V36.7 H7.5 Q5.4 36.7 5.2 34.6 Z" fill="#e4e5e9"/></svg>
<span class="t" style="left:2217.47px;top:1554.00px;font-size:29.5px;color:#e4e5e9;letter-spacing:1.050px;-webkit-text-stroke:1.1px #e4e5e9;">00:00:22</span>
<div class="b" style="left:2363.80px;top:1544.80px;width:571.60px;height:52.50px;background:#131e25;border-radius:5px;"></div>
<span class="t" style="left:2376.30px;top:1556.00px;font-size:31.5px;color:#e4e5e9;letter-spacing:0.443px;transform-origin:0 26px;transform:scaleY(1.04);">untitled</span>
<svg class="b" style="left:2960px;top:1553.2px" width="19.1" height="40" viewBox="0 0 19.1 40"><path d="M10.7 0 H22 V2.6 H9.4 Z M1.9 2.5 H22 V7.1 H1.9 Q0.9 7.1 0.9 6.1 V3.5 Q0.9 2.5 1.9 2.5 Z M3.5 9.1 H22 V36.7 H7.5 Q5.4 36.7 5.2 34.6 Z" fill="#e4e5e9"/></svg>
<span class="t" style="left:2217.47px;top:1656.00px;font-size:29.5px;color:#e4e5e9;letter-spacing:1.050px;-webkit-text-stroke:1.1px #e4e5e9;">00:00:21</span>
<div class="b" style="left:2363.80px;top:1646.40px;width:571.60px;height:52.50px;background:#131e25;border-radius:5px;"></div>
<span class="t" style="left:2376.30px;top:1658.00px;font-size:31.5px;color:#e4e5e9;letter-spacing:0.443px;transform-origin:0 26px;transform:scaleY(1.04);">untitled</span>
<svg class="b" style="left:2960px;top:1655.4px" width="19.1" height="40" viewBox="0 0 19.1 40"><path d="M10.7 0 H22 V2.6 H9.4 Z M1.9 2.5 H22 V7.1 H1.9 Q0.9 7.1 0.9 6.1 V3.5 Q0.9 2.5 1.9 2.5 Z M3.5 9.1 H22 V36.7 H7.5 Q5.4 36.7 5.2 34.6 Z" fill="#e4e5e9"/></svg>
<div class="b" style="left:2363.80px;top:1748.00px;width:571.60px;height:7.40px;background:#131e25;border-radius:5px 5px 0 0;"></div>
<div class="b" style="left:2979.20px;top:1311.20px;width:38.10px;height:480.00px;background:#2c3542;"></div>
<div class="b" style="left:2979.20px;top:1311.20px;width:38.10px;height:39.50px;background:#242b37;"></div>
<div class="b" style="left:2979.20px;top:1350.70px;width:38.10px;height:305.00px;background:#80868e;"></div>
<div class="b" style="left:2979.20px;top:1718.00px;width:38.10px;height:37.60px;background:#242b37;"></div>
<svg class="b" style="left:2978.9px;top:1310.8px" width="40" height="40" viewBox="0 0 40 40"><polygon points="10.9,21.2 20.0,12.2 29.1,21.2 29.1,27.9 20.0,18.8 10.9,27.9" fill="#6b6f7a"/></svg>
<svg class="b" style="left:2978.9px;top:1718.3px" width="40" height="40" viewBox="0 0 40 40"><polygon points="10.9,18.8 20.0,27.9 29.1,18.8 29.1,12.2 20.0,21.2 10.9,12.2" fill="#6b6f7a"/></svg>
<div class="b" style="left:2195.40px;top:1755.60px;width:783.80px;height:40.00px;background:#2c3542;"></div>
<div class="b" style="left:2195.40px;top:1755.60px;width:37.30px;height:40.00px;background:#242b37;"></div>
<div class="b" style="left:2232.70px;top:1755.60px;width:668.50px;height:40.00px;background:#80868e;"></div>
<div class="b" style="left:2942.00px;top:1755.60px;width:37.20px;height:40.00px;background:#242b37;"></div>
<svg class="b" style="left:2192.9px;top:1755.0px" width="40" height="40" viewBox="0 0 40 40"><polygon points="21.2,10.9 12.2,20.0 21.2,29.1 27.9,29.1 18.8,20.0 27.9,10.9" fill="#6b6f7a"/></svg>
<svg class="b" style="left:2942.1px;top:1755.0px" width="40" height="40" viewBox="0 0 40 40"><polygon points="18.8,10.9 27.9,20.0 18.8,29.1 12.2,29.1 21.2,20.0 12.2,10.9" fill="#6b6f7a"/></svg>
<svg class="b" style="left:1985px;top:1738px" width="42" height="52" viewBox="0 0 42 52"><path d="M14.6 31.6 L14.6 6.0 Q14.6 3.1 17.3 3.1 Q20.0 3.1 20.0 6.0 L20.0 16.2 Q20.0 13.8 23.0 13.8 Q26.0 13.8 26.0 16.8 Q26.0 14.3 29.0 14.3 Q32.0 14.3 32.0 17.6 Q32.0 16.2 35.0 16.2 Q37.9 16.2 37.9 19.6 L37.9 36.0 Q37.9 44.0 30.0 52.0 L21.0 52.0 L5.3 33.6 Q3.2 30.8 5.3 29.2 Q7.3 28.0 9.8 29.6 Z" fill="#fff" stroke="#0a1020" stroke-width="1.5" stroke-linejoin="round"/><path d="M20.0 16.0 V23.8 M26.0 16.6 V23.8 M32.0 17.6 V23.8" fill="none" stroke="#0a1020" stroke-width="1.4"/></svg>
</body></html>
